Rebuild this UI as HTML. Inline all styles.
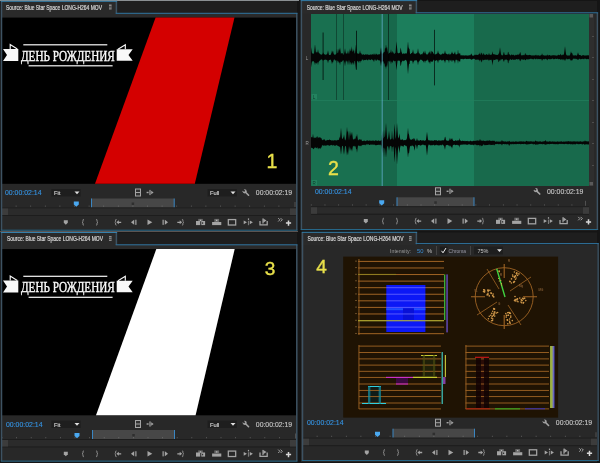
<!DOCTYPE html>
<html><head><meta charset="utf-8"><style>
html,body{margin:0;padding:0;background:#151515;width:600px;height:463px;overflow:hidden;}
svg{display:block;font-family:"Liberation Sans",sans-serif;will-change:transform;}
</style></head><body>
<svg width="600" height="463" viewBox="0 0 600 463" font-family="Liberation Sans"><rect x="0" y="0" width="600" height="463" fill="#151515" /><rect x="0" y="0" width="299" height="1" fill="#8a8f92" /><rect x="117" y="1" width="180" height="12.5" fill="#1e1e1e" /><rect x="1" y="1" width="116" height="13" fill="#2a2a2a" /><rect x="1" y="13.5" width="296" height="217" fill="#282828" /><rect x="1" y="13" width="296" height="4.600000000000001" fill="#2a2a2a" /><text x="6" y="9.6" font-size="6.5" fill="#d4d4d4" text-anchor="start" textLength="96" lengthAdjust="spacingAndGlyphs" stroke="#d4d4d4" stroke-width="0.22">Source: Blue Star Space LONG-H264 MOV</text><rect x="109" y="4.5" width="2.6" height="5" fill="#8a8a8a"/><rect x="109" y="6" width="2.6" height="0.6" fill="#2a2a2a"/><rect x="109" y="7.6" width="2.6" height="0.6" fill="#2a2a2a"/><rect x="2" y="17.6" width="295" height="166.2" fill="#000000" /><polygon points="155.6,17.6 234.5,17.6 194.8,183.8 95,183.8" fill="#d40000"/><g fill="#f8f8f8"><path d="M3,49 H18.3 V60.9 H3 L7,55 Z"/><path d="M116.7,49.3 H132.7 L128.5,55 L132.7,60.7 H116.7 Z"/></g><path d="M10.2,49 V44.6 L17.3,49" stroke="#f8f8f8" stroke-width="1.15" fill="none"/><path d="M118,49.3 L125.3,44.8 V49.3" stroke="#f8f8f8" stroke-width="1.15" fill="none"/><rect x="23.3" y="44.2" width="84" height="1.2" fill="#f8f8f8"/><rect x="28.6" y="65.2" width="84" height="1.2" fill="#f8f8f8"/><text x="21" y="60.8" font-family="Liberation Serif" font-size="15.4" fill="#f8f8f8" stroke="#f8f8f8" stroke-width="0.45" textLength="93.7" lengthAdjust="spacingAndGlyphs">ДЕНЬ РОЖДЕНИЯ</text><text x="272" y="167.8" font-size="19.5" fill="#e8e04a" text-anchor="middle" stroke="#e8e04a" stroke-width="0.35">1</text><text x="5" y="195.0" font-size="7.6" fill="#3592e0" text-anchor="start" textLength="36.5" lengthAdjust="spacingAndGlyphs" stroke="#3592e0" stroke-width="0.15">00:00:02:14</text><text x="292.2" y="195.0" font-size="7.6" fill="#c4c4c4" text-anchor="end" textLength="36.4" lengthAdjust="spacingAndGlyphs" stroke="#c8c8c8" stroke-width="0.15">00:00:02:19</text><g transform="translate(246,192.7) scale(0.85)"><path d="M-0.5,-0.5 L3,3" stroke="#a4a4a4" stroke-width="1.9" stroke-linecap="round"/><circle cx="-1.6" cy="-1.6" r="2.4" fill="#a4a4a4"/><path d="M-4.6,-3.2 L-2.3,-0.9 L-0.9,-2.3 L-3.2,-4.6 Z" fill="#262626"/></g><rect x="51.3" y="189.0" width="29.4" height="7.5" fill="#1e1e1e" /><text x="54" y="195.0" font-size="5.8" fill="#d0d0d0" text-anchor="start" stroke="#d0d0d0" stroke-width="0.15">Fit</text><path d="M74.5,191.39999999999998 h5 l-2.5,2.8 z" fill="#e0e0e0"/><rect x="207.5" y="189.0" width="29.4" height="7.5" fill="#1e1e1e" /><text x="210" y="195.0" font-size="5.8" fill="#d0d0d0" text-anchor="start" stroke="#d0d0d0" stroke-width="0.15">Full</text><path d="M230.5,191.39999999999998 h5 l-2.5,2.8 z" fill="#e0e0e0"/><rect x="135" y="188.5" width="6" height="8" fill="#a4a4a4"/><rect x="136" y="189.5" width="4" height="2.5" fill="#333"/><rect x="136" y="193.0" width="4" height="2.5" fill="#333"/><rect x="146.6" y="191.8" width="2" height="1.4" fill="#a4a4a4"/><rect x="149.4" y="189.9" width="1.2" height="5.2" fill="#a4a4a4"/><path d="M151.2,190.8 L153.6,192.5 L151.2,194.2 Z" fill="#a4a4a4"/><rect x="1.1" y="205.5" width="0.8" height="1.3" fill="#5a5a5a"/><rect x="15.700000000000001" y="205.5" width="0.8" height="1.3" fill="#5a5a5a"/><rect x="30.3" y="205.5" width="0.8" height="1.3" fill="#5a5a5a"/><rect x="44.9" y="205.5" width="0.8" height="1.3" fill="#5a5a5a"/><rect x="59.5" y="205.5" width="0.8" height="1.3" fill="#5a5a5a"/><rect x="74.1" y="205.5" width="0.8" height="1.3" fill="#5a5a5a"/><rect x="88.69999999999999" y="205.5" width="0.8" height="1.3" fill="#5a5a5a"/><rect x="103.3" y="205.5" width="0.8" height="1.3" fill="#5a5a5a"/><rect x="117.89999999999999" y="205.5" width="0.8" height="1.3" fill="#5a5a5a"/><rect x="132.5" y="205.5" width="0.8" height="1.3" fill="#5a5a5a"/><rect x="147.1" y="205.5" width="0.8" height="1.3" fill="#5a5a5a"/><rect x="161.7" y="205.5" width="0.8" height="1.3" fill="#5a5a5a"/><rect x="176.29999999999998" y="205.5" width="0.8" height="1.3" fill="#5a5a5a"/><rect x="190.89999999999998" y="205.5" width="0.8" height="1.3" fill="#5a5a5a"/><rect x="205.5" y="205.5" width="0.8" height="1.3" fill="#5a5a5a"/><rect x="220.1" y="205.5" width="0.8" height="1.3" fill="#5a5a5a"/><rect x="234.7" y="205.5" width="0.8" height="1.3" fill="#5a5a5a"/><rect x="249.29999999999998" y="205.5" width="0.8" height="1.3" fill="#5a5a5a"/><rect x="263.90000000000003" y="205.5" width="0.8" height="1.3" fill="#5a5a5a"/><rect x="278.5" y="205.5" width="0.8" height="1.3" fill="#5a5a5a"/><rect x="294.6" y="202.0" width="0.8" height="5" fill="#5a5a5a"/><rect x="91.5" y="198.5" width="82.69999999999999" height="9" fill="#474747" /><rect x="91.0" y="198.5" width="1" height="9" fill="#3a86c2"/><rect x="173.7" y="198.5" width="1" height="9" fill="#3a86c2"/><rect x="131.65" y="202.5" width="2.5" height="2.5" fill="#2e2e2e" /><rect x="103.3" y="205.5" width="0.8" height="1.3" fill="#6a6a6a"/><rect x="117.89999999999999" y="205.5" width="0.8" height="1.3" fill="#6a6a6a"/><rect x="132.5" y="205.5" width="0.8" height="1.3" fill="#6a6a6a"/><rect x="147.1" y="205.5" width="0.8" height="1.3" fill="#6a6a6a"/><rect x="161.7" y="205.5" width="0.8" height="1.3" fill="#6a6a6a"/><path d="M73.8,201.5 h5 v3 l-2.5,2.2 l-2.5,-2.2 z" fill="#4aa8f0"/><rect x="2" y="207.5" width="294" height="1" fill="#1d1d1d" /><rect x="2" y="208.5" width="294" height="6.5" fill="#2b2b2b" /><rect x="2" y="215.0" width="294" height="1" fill="#1d1d1d" /><rect x="2" y="208.5" width="6" height="6.5" fill="#3c3c3c" /><rect x="290" y="208.5" width="6" height="6.5" fill="#3c3c3c" /><g transform="translate(65.8,222.3) scale(0.8)"><path d="M-2.5,-2.5 h5 v3 l-2.5,2.5 l-2.5,-2.5 z" fill="#a4a4a4"/></g><g transform="translate(83,222.3) scale(0.8)"><path d="M1.2,-3.5 h-0.6 q-0.6,0 -0.6,0.6 v2 l-1.0,0.9 l1.0,0.9 v2 q0,0.6 0.6,0.6 h0.6" stroke="#a4a4a4" stroke-width="1" fill="none"/></g><g transform="translate(97,222.3) scale(0.8)"><path d="M-1.2,-3.5 h0.6 q0.6,0 0.6,0.6 v2 l1.0,0.9 l-1.0,0.9 v2 q0,0.6 -0.6,0.6 h-0.6" stroke="#a4a4a4" stroke-width="1" fill="none"/></g><g transform="translate(118,222.3) scale(0.8)"><path d="M-1.8,-3.5 h-0.6 q-0.6,0 -0.6,0.6 v2 l-1.0,0.9 l1.0,0.9 v2 q0,0.6 0.6,0.6 h0.6" stroke="#a4a4a4" stroke-width="1" fill="none"/><path d="M-2,0 l3,-2.5 v1.7 h3 v1.6 h-3 v1.7 z" fill="#a4a4a4"/></g><g transform="translate(134,222.3) scale(0.8)"><path d="M-3.8,0 l4,-3.2 v6.4 z" fill="#a4a4a4"/><rect x="1.6" y="-3.2" width="1.5" height="6.4" fill="#a4a4a4"/></g><g transform="translate(149.5,222.3) scale(0.8)"><path d="M-2.5,-3.5 l6,3.5 l-6,3.5 z" fill="#a4a4a4"/></g><g transform="translate(165,222.3) scale(0.8)"><rect x="-3.1" y="-3.2" width="1.5" height="6.4" fill="#a4a4a4"/><path d="M-0.2,-3.2 l4,3.2 l-4,3.2 z" fill="#a4a4a4"/></g><g transform="translate(180.5,222.3) scale(0.8)"><path d="M-4,-0.8 h3 v-1.7 l3,2.5 l-3,2.5 v-1.7 h-3 z" fill="#a4a4a4"/><path d="M1.8,-3.5 h0.6 q0.6,0 0.6,0.6 v2 l1.0,0.9 l-1.0,0.9 v2 q0,0.6 -0.6,0.6 h-0.6" stroke="#a4a4a4" stroke-width="1" fill="none"/></g><g transform="translate(200.5,222.3) scale(1.0)"><rect x="-2.3" y="-3.4" width="4.6" height="2.6" fill="#6a6a6a"/><rect x="-0.6" y="-2.5" width="1.2" height="1.2" fill="#b8b8b8"/><rect x="-4.5" y="-1.3" width="4.2" height="4.1" fill="#a4a4a4"/><rect x="0.8" y="-1.3" width="3.8" height="4.1" fill="#a4a4a4"/><rect x="1.5" y="0" width="1.2" height="1.5" fill="#303030"/></g><g transform="translate(216.7,222.3) scale(1.0)"><rect x="-4.6" y="-0.3" width="9.2" height="3.1" fill="#a4a4a4"/><rect x="-2.4" y="-3.4" width="4.8" height="3.1" fill="#6a6a6a"/><rect x="-0.6" y="-2.5" width="1.2" height="1.2" fill="#c0c0c0"/></g><g transform="translate(232,222.3) scale(0.8)"><rect x="-4.6" y="-3.4" width="9.2" height="6.8" fill="none" stroke="#a4a4a4" stroke-width="1.6"/></g><g transform="translate(248.5,222.3) scale(1.0)"><path d="M-4.8,-1.9 L-1.5,0 L-4.8,1.9 Z M1.3,-1.9 L4.4,0 L1.3,1.9 Z" fill="#a4a4a4"/><rect x="-0.6" y="-3.9" width="1.2" height="1.5" fill="#a4a4a4"/><rect x="-0.6" y="-1.5" width="1.2" height="4.4" fill="#7a7a7a"/></g><g transform="translate(263.6,222.3) scale(1.0)"><path d="M-3.6,-1.2 V2.6 H3.6 V-1.2" stroke="#a4a4a4" stroke-width="1.3" fill="none"/><path d="M-0.4,-3.9 L2.9,-1.7 L-0.4,0.5 Z" fill="#a4a4a4"/><rect x="-1.2" y="-3.9" width="1.1" height="5.2" fill="#a4a4a4"/></g><path d="M278.2,218.10000000000002 l1.7,1.7 l-1.7,1.7 M280.6,218.10000000000002 l1.7,1.7 l-1.7,1.7" stroke="#b8b8b8" stroke-width="0.85" fill="none"/><path d="M285.9,223.10000000000002 h5.2 M288.5,220.5 v5.2" stroke="#d8d8d8" stroke-width="1.5"/><rect x="0.75" y="1.3" width="1.5" height="228.89999999999998" fill="#3d5262"/><rect x="115.65" y="1.3" width="1.5" height="12.0" fill="#3d5262"/><rect x="296.05" y="13.3" width="1.5" height="216.89999999999998" fill="#3d5262"/><rect x="0.75" y="0.8" width="116.4" height="1" fill="#3580ac"/><rect x="115.65" y="12.8" width="181.9" height="1" fill="#2f74a0"/><rect x="0.75" y="229.7" width="296.8" height="1" fill="#276788"/><rect x="0" y="231" width="298" height="1" fill="#5a5452" /><rect x="117" y="232.5" width="180" height="12.5" fill="#1e1e1e" /><rect x="1" y="232.5" width="116" height="13" fill="#2a2a2a" /><rect x="1" y="245.0" width="296" height="217" fill="#282828" /><rect x="1" y="244.5" width="296" height="4.600000000000001" fill="#2a2a2a" /><text x="7" y="241.1" font-size="6.5" fill="#d4d4d4" text-anchor="start" textLength="96" lengthAdjust="spacingAndGlyphs" stroke="#d4d4d4" stroke-width="0.22">Source: Blue Star Space LONG-H264 MOV</text><rect x="109" y="236.0" width="2.6" height="5" fill="#8a8a8a"/><rect x="109" y="237.5" width="2.6" height="0.6" fill="#2a2a2a"/><rect x="109" y="239.1" width="2.6" height="0.6" fill="#2a2a2a"/><rect x="2" y="249.1" width="295" height="166.2" fill="#000000" /><polygon points="156.3,249.1 234.7,249.1 195.6,415.3 96,415.3" fill="#ffffff"/><g fill="#f8f8f8"><path d="M3,280.5 H18.3 V292.4 H3 L7,286.5 Z"/><path d="M116.7,280.8 H132.7 L128.5,286.5 L132.7,292.2 H116.7 Z"/></g><path d="M10.2,280.5 V276.1 L17.3,280.5" stroke="#f8f8f8" stroke-width="1.15" fill="none"/><path d="M118,280.8 L125.3,276.3 V280.8" stroke="#f8f8f8" stroke-width="1.15" fill="none"/><rect x="23.3" y="275.7" width="84" height="1.2" fill="#f8f8f8"/><rect x="28.6" y="296.7" width="84" height="1.2" fill="#f8f8f8"/><text x="21" y="292.3" font-family="Liberation Serif" font-size="15.4" fill="#f8f8f8" stroke="#f8f8f8" stroke-width="0.45" textLength="93.7" lengthAdjust="spacingAndGlyphs">ДЕНЬ РОЖДЕНИЯ</text><text x="270" y="274.7" font-size="19" fill="#e8e04a" text-anchor="middle" stroke="#e8e04a" stroke-width="0.35">3</text><text x="6" y="426.5" font-size="7.6" fill="#3592e0" text-anchor="start" textLength="36.5" lengthAdjust="spacingAndGlyphs" stroke="#3592e0" stroke-width="0.15">00:00:02:14</text><text x="292.2" y="426.5" font-size="7.6" fill="#c4c4c4" text-anchor="end" textLength="36.4" lengthAdjust="spacingAndGlyphs" stroke="#c8c8c8" stroke-width="0.15">00:00:02:19</text><g transform="translate(246,424.2) scale(0.85)"><path d="M-0.5,-0.5 L3,3" stroke="#a4a4a4" stroke-width="1.9" stroke-linecap="round"/><circle cx="-1.6" cy="-1.6" r="2.4" fill="#a4a4a4"/><path d="M-4.6,-3.2 L-2.3,-0.9 L-0.9,-2.3 L-3.2,-4.6 Z" fill="#262626"/></g><rect x="51.3" y="420.5" width="29.4" height="7.5" fill="#1e1e1e" /><text x="54" y="426.5" font-size="5.8" fill="#d0d0d0" text-anchor="start" stroke="#d0d0d0" stroke-width="0.15">Fit</text><path d="M74.5,422.9 h5 l-2.5,2.8 z" fill="#e0e0e0"/><rect x="207.5" y="420.5" width="29.4" height="7.5" fill="#1e1e1e" /><text x="210" y="426.5" font-size="5.8" fill="#d0d0d0" text-anchor="start" stroke="#d0d0d0" stroke-width="0.15">Full</text><path d="M230.5,422.9 h5 l-2.5,2.8 z" fill="#e0e0e0"/><rect x="135" y="420.0" width="6" height="8" fill="#a4a4a4"/><rect x="136" y="421.0" width="4" height="2.5" fill="#333"/><rect x="136" y="424.5" width="4" height="2.5" fill="#333"/><rect x="146.6" y="423.3" width="2" height="1.4" fill="#a4a4a4"/><rect x="149.4" y="421.4" width="1.2" height="5.2" fill="#a4a4a4"/><path d="M151.2,422.3 L153.6,424.0 L151.2,425.7 Z" fill="#a4a4a4"/><rect x="1.6" y="437.0" width="0.8" height="1.3" fill="#5a5a5a"/><rect x="16.200000000000003" y="437.0" width="0.8" height="1.3" fill="#5a5a5a"/><rect x="30.8" y="437.0" width="0.8" height="1.3" fill="#5a5a5a"/><rect x="45.4" y="437.0" width="0.8" height="1.3" fill="#5a5a5a"/><rect x="60.0" y="437.0" width="0.8" height="1.3" fill="#5a5a5a"/><rect x="74.6" y="437.0" width="0.8" height="1.3" fill="#5a5a5a"/><rect x="89.19999999999999" y="437.0" width="0.8" height="1.3" fill="#5a5a5a"/><rect x="103.8" y="437.0" width="0.8" height="1.3" fill="#5a5a5a"/><rect x="118.39999999999999" y="437.0" width="0.8" height="1.3" fill="#5a5a5a"/><rect x="133.0" y="437.0" width="0.8" height="1.3" fill="#5a5a5a"/><rect x="147.6" y="437.0" width="0.8" height="1.3" fill="#5a5a5a"/><rect x="162.2" y="437.0" width="0.8" height="1.3" fill="#5a5a5a"/><rect x="176.79999999999998" y="437.0" width="0.8" height="1.3" fill="#5a5a5a"/><rect x="191.39999999999998" y="437.0" width="0.8" height="1.3" fill="#5a5a5a"/><rect x="206.0" y="437.0" width="0.8" height="1.3" fill="#5a5a5a"/><rect x="220.6" y="437.0" width="0.8" height="1.3" fill="#5a5a5a"/><rect x="235.2" y="437.0" width="0.8" height="1.3" fill="#5a5a5a"/><rect x="249.79999999999998" y="437.0" width="0.8" height="1.3" fill="#5a5a5a"/><rect x="264.40000000000003" y="437.0" width="0.8" height="1.3" fill="#5a5a5a"/><rect x="279.0" y="437.0" width="0.8" height="1.3" fill="#5a5a5a"/><rect x="295.1" y="433.5" width="0.8" height="5" fill="#5a5a5a"/><rect x="92.5" y="430.0" width="82.0" height="9" fill="#474747" /><rect x="92.0" y="430.0" width="1" height="9" fill="#3a86c2"/><rect x="174.0" y="430.0" width="1" height="9" fill="#3a86c2"/><rect x="132.3" y="434.0" width="2.5" height="2.5" fill="#2e2e2e" /><rect x="103.8" y="437.0" width="0.8" height="1.3" fill="#6a6a6a"/><rect x="118.39999999999999" y="437.0" width="0.8" height="1.3" fill="#6a6a6a"/><rect x="133.0" y="437.0" width="0.8" height="1.3" fill="#6a6a6a"/><rect x="147.6" y="437.0" width="0.8" height="1.3" fill="#6a6a6a"/><rect x="162.2" y="437.0" width="0.8" height="1.3" fill="#6a6a6a"/><path d="M74.5,433.0 h5 v3 l-2.5,2.2 l-2.5,-2.2 z" fill="#4aa8f0"/><rect x="2" y="439.0" width="294" height="1" fill="#1d1d1d" /><rect x="2" y="440.0" width="294" height="6.5" fill="#2b2b2b" /><rect x="2" y="446.5" width="294" height="1" fill="#1d1d1d" /><rect x="2" y="440.0" width="6" height="6.5" fill="#3c3c3c" /><rect x="290" y="440.0" width="6" height="6.5" fill="#3c3c3c" /><g transform="translate(65.8,453.8) scale(0.8)"><path d="M-2.5,-2.5 h5 v3 l-2.5,2.5 l-2.5,-2.5 z" fill="#a4a4a4"/></g><g transform="translate(83,453.8) scale(0.8)"><path d="M1.2,-3.5 h-0.6 q-0.6,0 -0.6,0.6 v2 l-1.0,0.9 l1.0,0.9 v2 q0,0.6 0.6,0.6 h0.6" stroke="#a4a4a4" stroke-width="1" fill="none"/></g><g transform="translate(97,453.8) scale(0.8)"><path d="M-1.2,-3.5 h0.6 q0.6,0 0.6,0.6 v2 l1.0,0.9 l-1.0,0.9 v2 q0,0.6 -0.6,0.6 h-0.6" stroke="#a4a4a4" stroke-width="1" fill="none"/></g><g transform="translate(118,453.8) scale(0.8)"><path d="M-1.8,-3.5 h-0.6 q-0.6,0 -0.6,0.6 v2 l-1.0,0.9 l1.0,0.9 v2 q0,0.6 0.6,0.6 h0.6" stroke="#a4a4a4" stroke-width="1" fill="none"/><path d="M-2,0 l3,-2.5 v1.7 h3 v1.6 h-3 v1.7 z" fill="#a4a4a4"/></g><g transform="translate(134,453.8) scale(0.8)"><path d="M-3.8,0 l4,-3.2 v6.4 z" fill="#a4a4a4"/><rect x="1.6" y="-3.2" width="1.5" height="6.4" fill="#a4a4a4"/></g><g transform="translate(149.5,453.8) scale(0.8)"><path d="M-2.5,-3.5 l6,3.5 l-6,3.5 z" fill="#a4a4a4"/></g><g transform="translate(165,453.8) scale(0.8)"><rect x="-3.1" y="-3.2" width="1.5" height="6.4" fill="#a4a4a4"/><path d="M-0.2,-3.2 l4,3.2 l-4,3.2 z" fill="#a4a4a4"/></g><g transform="translate(180.5,453.8) scale(0.8)"><path d="M-4,-0.8 h3 v-1.7 l3,2.5 l-3,2.5 v-1.7 h-3 z" fill="#a4a4a4"/><path d="M1.8,-3.5 h0.6 q0.6,0 0.6,0.6 v2 l1.0,0.9 l-1.0,0.9 v2 q0,0.6 -0.6,0.6 h-0.6" stroke="#a4a4a4" stroke-width="1" fill="none"/></g><g transform="translate(200.5,453.8) scale(1.0)"><rect x="-2.3" y="-3.4" width="4.6" height="2.6" fill="#6a6a6a"/><rect x="-0.6" y="-2.5" width="1.2" height="1.2" fill="#b8b8b8"/><rect x="-4.5" y="-1.3" width="4.2" height="4.1" fill="#a4a4a4"/><rect x="0.8" y="-1.3" width="3.8" height="4.1" fill="#a4a4a4"/><rect x="1.5" y="0" width="1.2" height="1.5" fill="#303030"/></g><g transform="translate(216.7,453.8) scale(1.0)"><rect x="-4.6" y="-0.3" width="9.2" height="3.1" fill="#a4a4a4"/><rect x="-2.4" y="-3.4" width="4.8" height="3.1" fill="#6a6a6a"/><rect x="-0.6" y="-2.5" width="1.2" height="1.2" fill="#c0c0c0"/></g><g transform="translate(232,453.8) scale(0.8)"><rect x="-4.6" y="-3.4" width="9.2" height="6.8" fill="none" stroke="#a4a4a4" stroke-width="1.6"/></g><g transform="translate(248.5,453.8) scale(1.0)"><path d="M-4.8,-1.9 L-1.5,0 L-4.8,1.9 Z M1.3,-1.9 L4.4,0 L1.3,1.9 Z" fill="#a4a4a4"/><rect x="-0.6" y="-3.9" width="1.2" height="1.5" fill="#a4a4a4"/><rect x="-0.6" y="-1.5" width="1.2" height="4.4" fill="#7a7a7a"/></g><g transform="translate(263.6,453.8) scale(1.0)"><path d="M-3.6,-1.2 V2.6 H3.6 V-1.2" stroke="#a4a4a4" stroke-width="1.3" fill="none"/><path d="M-0.4,-3.9 L2.9,-1.7 L-0.4,0.5 Z" fill="#a4a4a4"/><rect x="-1.2" y="-3.9" width="1.1" height="5.2" fill="#a4a4a4"/></g><path d="M278.2,449.6 l1.7,1.7 l-1.7,1.7 M280.6,449.6 l1.7,1.7 l-1.7,1.7" stroke="#b8b8b8" stroke-width="0.85" fill="none"/><path d="M285.9,454.6 h5.2 M288.5,452.0 v5.2" stroke="#d8d8d8" stroke-width="1.5"/><rect x="0.75" y="232.5" width="1.5" height="228.6" fill="#3d5262"/><rect x="115.65" y="232.5" width="1.5" height="12.3" fill="#3d5262"/><rect x="296.05" y="244.8" width="1.5" height="216.29999999999998" fill="#3d5262"/><rect x="0.75" y="232.0" width="116.4" height="1" fill="#3580ac"/><rect x="115.65" y="244.3" width="181.9" height="1" fill="#2f74a0"/><rect x="0.75" y="460.6" width="296.8" height="1" fill="#276788"/><rect x="417" y="1" width="180" height="12.5" fill="#1e1e1e" /><rect x="301" y="1" width="116" height="13" fill="#2a2a2a" /><rect x="301" y="13.5" width="296" height="217" fill="#282828" /><text x="306.7" y="9.6" font-size="6.5" fill="#d4d4d4" text-anchor="start" textLength="96" lengthAdjust="spacingAndGlyphs" stroke="#d4d4d4" stroke-width="0.22">Source: Blue Star Space LONG-H264 MOV</text><rect x="409" y="4.5" width="2.6" height="5" fill="#8a8a8a"/><rect x="409" y="6" width="2.6" height="0.6" fill="#2a2a2a"/><rect x="409" y="7.6" width="2.6" height="0.6" fill="#2a2a2a"/><rect x="311" y="14" width="71.5" height="172" fill="#197050" /><rect x="382.5" y="14" width="14.5" height="172" fill="#17684b" /><rect x="397" y="14" width="77" height="172" fill="#1c7e5c" /><rect x="474" y="14" width="115" height="172" fill="#186a4c" /><rect x="311" y="100" width="278" height="1" fill="#22805e" opacity="0.7"/><rect x="589" y="14" width="5" height="172" fill="#2e2e2e" /><rect x="589.5" y="14" width="3.5" height="3.5" fill="#5a5a5a" /><rect x="589.5" y="182" width="3.5" height="3.5" fill="#5a5a5a" /><rect x="592" y="36" width="2" height="0.8" fill="#555"/><rect x="592" y="57" width="2" height="0.8" fill="#555"/><rect x="592" y="79" width="2" height="0.8" fill="#555"/><rect x="592" y="100" width="2" height="0.8" fill="#555"/><rect x="592" y="122" width="2" height="0.8" fill="#555"/><rect x="592" y="143" width="2" height="0.8" fill="#555"/><rect x="592" y="165" width="2" height="0.8" fill="#555"/><text x="307" y="59.5" font-size="4.5" fill="#9a9a9a" text-anchor="middle" >L</text><text x="307" y="145" font-size="4.5" fill="#9a9a9a" text-anchor="middle" >R</text><rect x="311.5" y="94" width="5.5" height="5.5" fill="#23825f" /><text x="314" y="98.7" font-size="4.5" fill="#0a3a28" text-anchor="middle" >L</text><rect x="311.5" y="180" width="5.5" height="5.5" fill="#23825f" /><text x="314" y="184.7" font-size="4.5" fill="#0a3a28" text-anchor="middle" >R</text><polygon points="311.0,53.30 311.5,46.88 312.0,53.18 312.5,53.83 313.0,52.94 313.5,54.01 314.0,53.49 314.5,48.84 315.0,44.20 315.5,48.84 316.0,52.88 316.5,51.47 317.0,52.67 317.5,52.06 318.0,49.20 318.5,52.06 319.0,53.20 319.5,53.29 320.0,53.95 320.5,54.16 321.0,54.84 321.5,54.87 322.0,54.25 322.5,54.15 323.0,52.23 323.5,53.37 324.0,54.07 324.5,53.98 325.0,55.16 325.5,54.24 326.0,55.14 326.5,54.00 327.0,54.48 327.5,52.70 328.0,50.20 328.5,52.70 329.0,55.00 329.5,55.08 330.0,55.10 330.5,54.97 331.0,53.99 331.5,52.70 332.0,50.20 332.5,52.70 333.0,50.61 333.5,53.19 334.0,54.25 334.5,54.86 335.0,54.66 335.5,54.41 336.0,54.21 336.5,53.27 337.0,48.60 337.5,52.63 338.0,53.35 338.5,50.43 339.0,48.47 339.5,50.77 340.0,47.20 340.5,50.77 341.0,54.34 341.5,52.99 342.0,53.03 342.5,53.08 343.0,54.52 343.5,54.69 344.0,53.91 344.5,51.41 345.0,48.20 345.5,51.41 346.0,54.09 346.5,53.01 347.0,53.88 347.5,52.70 348.0,50.20 348.5,52.70 349.0,54.19 349.5,51.32 350.0,48.20 350.5,51.41 351.0,50.25 351.5,46.31 352.0,51.71 352.5,51.41 353.0,48.20 353.5,51.41 354.0,49.75 354.5,53.36 355.0,53.49 355.5,48.84 356.0,44.20 356.5,48.84 357.0,53.49 357.5,53.21 358.0,53.63 358.5,53.39 359.0,54.10 359.5,52.70 360.0,50.20 360.5,52.70 361.0,53.51 361.5,53.62 362.0,54.92 362.5,54.25 363.0,54.99 363.5,53.71 364.0,54.64 364.5,54.82 365.0,54.99 365.5,54.20 366.0,54.11 366.5,54.49 367.0,55.07 367.5,54.16 368.0,54.33 368.5,54.89 369.0,54.66 369.5,54.97 370.0,54.44 370.5,54.84 371.0,53.97 371.5,55.15 372.0,54.12 372.5,54.33 373.0,54.85 373.5,54.57 374.0,53.20 374.5,54.17 375.0,55.07 375.5,54.43 376.0,53.17 376.5,54.20 377.0,54.36 377.5,54.63 378.0,54.85 378.5,54.32 379.0,54.29 379.5,54.34 380.0,54.34 380.5,50.77 381.0,47.20 381.5,50.77 382.0,54.10 382.5,53.16 383.0,53.63 383.5,52.68 384.0,51.65 384.5,52.16 385.0,47.83 385.5,48.84 386.0,44.20 386.5,48.84 387.0,46.42 387.5,50.22 388.0,52.72 388.5,54.19 389.0,53.30 389.5,52.74 390.0,52.81 390.5,52.06 391.0,49.20 391.5,52.06 392.0,53.37 392.5,50.73 393.0,52.55 393.5,52.55 394.0,53.93 394.5,53.80 395.0,53.14 395.5,52.63 396.0,46.91 396.5,41.20 397.0,46.91 397.5,52.51 398.0,53.26 398.5,53.33 399.0,53.20 399.5,52.51 400.0,53.36 400.5,47.39 401.0,49.20 401.5,52.06 402.0,52.90 402.5,54.10 403.0,54.35 403.5,53.15 404.0,53.27 404.5,54.24 405.0,52.96 405.5,53.21 406.0,54.24 406.5,53.37 407.0,52.63 407.5,46.91 408.0,41.20 408.5,46.91 409.0,48.87 409.5,48.82 410.0,53.65 410.5,54.22 411.0,53.46 411.5,53.09 412.0,53.08 412.5,52.06 413.0,49.20 413.5,52.06 414.0,54.19 414.5,53.02 415.0,54.16 415.5,54.12 416.0,53.12 416.5,53.19 417.0,53.87 417.5,51.41 418.0,48.20 418.5,51.41 419.0,53.69 419.5,52.94 420.0,54.50 420.5,54.79 421.0,54.12 421.5,54.10 422.0,54.67 422.5,53.69 423.0,52.77 423.5,50.97 424.0,53.63 424.5,52.70 425.0,50.20 425.5,52.70 426.0,53.90 426.5,54.68 427.0,53.40 427.5,54.66 428.0,54.18 428.5,53.00 429.0,51.93 429.5,52.70 430.0,50.20 430.5,52.70 431.0,54.56 431.5,50.40 432.0,51.64 432.5,51.61 433.0,52.55 433.5,53.80 434.0,53.87 434.5,54.44 435.0,54.74 435.5,53.99 436.0,54.60 436.5,53.50 437.0,53.96 437.5,52.70 438.0,50.20 438.5,52.70 439.0,53.48 439.5,54.03 440.0,54.57 440.5,54.82 441.0,54.39 441.5,54.57 442.0,54.12 442.5,53.50 443.0,53.46 443.5,53.74 444.0,54.05 444.5,52.70 445.0,50.20 445.5,52.70 446.0,54.03 446.5,53.53 447.0,54.16 447.5,54.40 448.0,53.97 448.5,54.52 449.0,53.02 449.5,54.58 450.0,54.72 450.5,54.37 451.0,53.83 451.5,53.34 452.0,51.20 452.5,53.34 453.0,53.49 453.5,54.16 454.0,53.87 454.5,53.08 455.0,51.21 455.5,54.01 456.0,54.64 456.5,54.16 457.0,54.29 457.5,53.93 458.0,49.24 458.5,53.49 459.0,53.45 459.5,53.66 460.0,52.86 460.5,55.14 461.0,55.53 461.5,55.23 462.0,55.32 462.5,55.17 463.0,55.63 463.5,55.03 464.0,55.81 464.5,55.61 465.0,55.29 465.5,55.36 466.0,55.77 466.5,55.35 467.0,55.51 467.5,55.66 468.0,55.18 468.5,55.78 469.0,55.12 469.5,55.16 470.0,55.47 470.5,55.12 471.0,53.94 471.5,53.47 472.0,55.15 472.5,55.47 473.0,55.76 473.5,55.78 474.0,55.34 474.5,55.23 475.0,54.36 475.5,55.06 476.0,55.15 476.5,54.42 477.0,54.97 477.5,54.88 478.0,54.87 478.5,54.44 479.0,54.18 479.5,53.84 480.0,52.20 480.5,54.93 481.0,54.16 481.5,52.51 482.0,53.32 482.5,54.83 483.0,55.08 483.5,52.81 484.0,54.28 484.5,55.10 485.0,54.22 485.5,55.30 486.0,54.64 486.5,54.12 487.0,54.32 487.5,54.64 488.0,55.22 488.5,54.40 489.0,52.80 489.5,54.79 490.0,54.51 490.5,55.05 491.0,54.67 491.5,54.83 492.0,53.96 492.5,51.18 493.0,54.06 493.5,54.18 494.0,54.29 494.5,54.26 495.0,54.63 495.5,54.50 496.0,54.97 496.5,54.67 497.0,55.09 497.5,54.73 498.0,55.14 498.5,53.41 499.0,53.82 499.5,50.77 500.0,47.20 500.5,50.77 501.0,54.34 501.5,54.91 502.0,55.51 502.5,55.35 503.0,55.29 503.5,52.90 504.0,51.87 504.5,54.32 505.0,55.09 505.5,54.65 506.0,55.26 506.5,54.54 507.0,54.95 507.5,54.74 508.0,51.69 508.5,52.22 509.0,54.97 509.5,54.08 510.0,54.83 510.5,55.54 511.0,55.14 511.5,54.32 512.0,54.67 512.5,55.20 513.0,54.59 513.5,54.85 514.0,55.26 514.5,55.38 515.0,55.55 515.5,54.62 516.0,55.46 516.5,54.76 517.0,55.02 517.5,54.50 518.0,54.61 518.5,54.68 519.0,54.54 519.5,53.99 520.0,52.20 520.5,52.51 521.0,55.21 521.5,55.47 522.0,55.04 522.5,55.15 523.0,55.43 523.5,55.04 524.0,54.64 524.5,55.51 525.0,53.46 525.5,53.18 526.0,55.22 526.5,54.67 527.0,54.87 527.5,55.14 528.0,55.22 528.5,55.12 529.0,55.27 529.5,54.75 530.0,55.00 530.5,55.20 531.0,55.11 531.5,55.72 532.0,55.24 532.5,55.69 533.0,55.10 533.5,55.39 534.0,55.71 534.5,55.48 535.0,55.02 535.5,55.39 536.0,54.59 536.5,55.40 537.0,55.48 537.5,55.49 538.0,54.97 538.5,55.26 539.0,55.83 539.5,55.54 540.0,55.75 540.5,55.39 541.0,55.11 541.5,55.23 542.0,53.33 542.5,54.56 543.0,55.72 543.5,54.96 544.0,55.21 544.5,55.67 545.0,55.29 545.5,55.78 546.0,55.33 546.5,55.55 547.0,55.52 547.5,54.16 548.0,55.73 548.5,55.36 549.0,55.35 549.5,55.03 550.0,55.11 550.5,55.74 551.0,55.59 551.5,55.63 552.0,55.10 552.5,55.36 553.0,55.82 553.5,54.96 554.0,55.26 554.5,55.25 555.0,55.51 555.5,55.13 556.0,55.67 556.5,55.72 557.0,55.34 557.5,55.38 558.0,55.16 558.5,54.47 559.0,55.25 559.5,54.99 560.0,55.37 560.5,53.70 561.0,54.55 561.5,55.41 562.0,55.10 562.5,55.30 563.0,53.97 563.5,55.22 564.0,54.06 564.5,50.13 565.0,46.20 565.5,50.13 566.0,54.06 566.5,55.32 567.0,55.13 567.5,55.40 568.0,55.80 568.5,55.38 569.0,55.15 569.5,55.64 570.0,55.03 570.5,53.34 571.0,51.20 571.5,53.34 572.0,52.75 572.5,53.91 573.0,55.74 573.5,54.99 574.0,55.63 574.5,55.56 575.0,55.04 575.5,55.49 576.0,55.32 576.5,55.82 577.0,55.57 577.5,53.99 578.0,52.20 578.5,53.99 579.0,55.04 579.5,55.10 580.0,55.11 580.5,55.06 581.0,55.67 581.5,55.68 582.0,55.80 582.5,55.20 583.0,55.04 583.5,55.21 584.0,55.22 584.5,55.45 585.0,55.65 585.5,55.21 586.0,55.69 586.5,55.25 587.0,55.51 587.5,55.05 588.0,55.64 588.5,55.02 589.0,55.60 589.0,59.13 588.5,59.15 588.0,58.82 587.5,59.08 587.0,59.15 586.5,59.26 586.0,58.76 585.5,58.73 585.0,58.83 584.5,58.62 584.0,59.39 583.5,58.67 583.0,59.33 582.5,58.83 582.0,58.65 581.5,59.34 581.0,59.12 580.5,59.45 580.0,59.10 579.5,58.87 579.0,58.73 578.5,59.38 578.0,60.20 577.5,59.43 577.0,59.00 576.5,59.36 576.0,58.59 575.5,58.87 575.0,59.28 574.5,58.61 574.0,58.82 573.5,58.55 573.0,59.03 572.5,59.87 572.0,60.81 571.5,59.77 571.0,61.20 570.5,59.77 570.0,59.42 569.5,58.61 569.0,59.54 568.5,58.77 568.0,59.18 567.5,58.91 567.0,59.85 566.5,58.61 566.0,58.82 565.5,59.77 565.0,61.20 564.5,59.77 564.0,59.36 563.5,59.26 563.0,60.55 562.5,59.17 562.0,59.32 561.5,59.45 561.0,59.25 560.5,59.90 560.0,58.92 559.5,59.09 559.0,59.30 558.5,59.35 558.0,58.85 557.5,58.79 557.0,58.71 556.5,58.90 556.0,58.97 555.5,58.56 555.0,59.08 554.5,59.21 554.0,58.83 553.5,59.40 553.0,58.71 552.5,58.62 552.0,58.72 551.5,59.07 551.0,59.36 550.5,59.29 550.0,59.09 549.5,59.44 549.0,58.79 548.5,59.05 548.0,59.36 547.5,60.42 547.0,58.97 546.5,59.39 546.0,59.18 545.5,58.77 545.0,58.73 544.5,59.40 544.0,59.30 543.5,59.01 543.0,59.19 542.5,59.86 542.0,61.09 541.5,59.24 541.0,59.10 540.5,59.26 540.0,58.89 539.5,59.14 539.0,58.85 538.5,59.10 538.0,59.26 537.5,59.18 537.0,58.56 536.5,58.85 536.0,59.29 535.5,59.13 535.0,58.93 534.5,58.62 534.0,58.66 533.5,59.51 533.0,59.27 532.5,58.91 532.0,59.19 531.5,58.63 531.0,58.63 530.5,58.85 530.0,59.06 529.5,59.21 529.0,59.07 528.5,59.58 528.0,59.22 527.5,59.44 527.0,59.17 526.5,59.08 526.0,59.94 525.5,60.19 525.0,59.97 524.5,59.26 524.0,59.57 523.5,59.91 523.0,59.28 522.5,59.61 522.0,59.64 521.5,59.19 521.0,59.19 520.5,61.02 520.0,61.20 519.5,59.77 519.0,58.95 518.5,59.31 518.0,59.18 517.5,59.50 517.0,59.37 516.5,58.96 516.0,59.15 515.5,59.75 515.0,59.75 514.5,59.70 514.0,59.44 513.5,59.94 513.0,59.42 512.5,59.14 512.0,59.64 511.5,59.99 511.0,59.73 510.5,59.37 510.0,59.11 509.5,61.03 509.0,59.42 508.5,62.79 508.0,63.38 507.5,59.96 507.0,59.90 506.5,59.23 506.0,59.83 505.5,59.38 505.0,59.76 504.5,59.79 504.0,61.98 503.5,61.06 503.0,59.64 502.5,59.09 502.0,59.08 501.5,59.85 501.0,59.35 500.5,59.77 500.0,61.20 499.5,59.77 499.0,61.72 498.5,62.27 498.0,59.03 497.5,59.94 497.0,59.01 496.5,59.31 496.0,59.63 495.5,59.55 495.0,59.83 494.5,60.08 494.0,59.91 493.5,59.59 493.0,61.51 492.5,65.46 492.0,61.65 491.5,59.50 491.0,60.03 490.5,60.03 490.0,59.38 489.5,60.01 489.0,60.72 488.5,60.20 488.0,59.18 487.5,60.06 487.0,59.16 486.5,59.89 486.0,59.78 485.5,59.72 485.0,59.43 484.5,60.02 484.0,59.78 483.5,60.48 483.0,59.78 482.5,59.56 482.0,61.53 481.5,62.42 481.0,60.19 480.5,59.57 480.0,61.69 479.5,60.22 479.0,60.25 478.5,59.79 478.0,59.22 477.5,59.98 477.0,59.25 476.5,59.94 476.0,59.45 475.5,59.90 475.0,59.17 474.5,58.82 474.0,58.99 473.5,58.62 473.0,59.34 472.5,58.88 472.0,59.38 471.5,59.81 471.0,59.48 470.5,58.88 470.0,58.78 469.5,58.74 469.0,59.11 468.5,58.66 468.0,59.30 467.5,58.86 467.0,58.98 466.5,59.12 466.0,59.16 465.5,58.62 465.0,58.64 464.5,58.93 464.0,58.81 463.5,59.34 463.0,59.43 462.5,58.72 462.0,59.12 461.5,59.06 461.0,58.79 460.5,59.11 460.0,62.21 459.5,61.28 459.0,60.88 458.5,60.25 458.0,63.75 457.5,59.89 457.0,60.45 456.5,59.64 456.0,59.53 455.5,60.13 455.0,63.79 454.5,61.74 454.0,60.15 453.5,60.86 453.0,59.82 452.5,60.41 452.0,62.20 451.5,60.87 451.0,59.53 450.5,60.80 450.0,60.58 449.5,59.51 449.0,63.33 448.5,60.52 448.0,60.29 447.5,59.88 447.0,60.35 446.5,60.08 446.0,59.54 445.5,61.06 445.0,63.20 444.5,61.06 444.0,60.59 443.5,59.56 443.0,60.41 442.5,60.30 442.0,60.21 441.5,60.81 441.0,59.60 440.5,59.74 440.0,60.05 439.5,60.56 439.0,59.48 438.5,61.06 438.0,63.20 437.5,61.06 437.0,60.30 436.5,59.96 436.0,60.87 435.5,60.39 435.0,61.05 434.5,60.15 434.0,59.56 433.5,60.06 433.0,61.04 432.5,61.70 432.0,61.68 431.5,61.98 431.0,60.82 430.5,61.70 430.0,64.20 429.5,61.70 429.0,62.81 428.5,61.67 428.0,59.47 427.5,59.70 427.0,60.88 426.5,60.13 426.0,60.72 425.5,61.06 425.0,63.20 424.5,61.06 424.0,60.60 423.5,62.71 423.0,61.12 422.5,60.94 422.0,59.76 421.5,59.67 421.0,60.22 420.5,59.51 420.0,59.82 419.5,61.34 419.0,61.15 418.5,62.34 418.0,65.20 417.5,62.34 417.0,61.02 416.5,60.05 416.0,60.56 415.5,59.99 415.0,61.10 414.5,60.06 414.0,61.57 413.5,61.70 413.0,64.20 412.5,61.70 412.0,60.23 411.5,60.90 411.0,60.75 410.5,60.93 410.0,60.10 409.5,64.04 409.0,64.00 408.5,68.13 408.0,74.20 407.5,68.13 407.0,62.06 406.5,60.39 406.0,60.22 405.5,59.86 405.0,60.05 404.5,60.91 404.0,60.38 403.5,61.40 403.0,60.58 402.5,60.65 402.0,61.44 401.5,62.34 401.0,65.20 400.5,66.04 400.0,61.23 399.5,61.03 399.0,60.10 398.5,61.01 398.0,60.43 397.5,61.05 397.0,65.56 396.5,70.20 396.0,65.56 395.5,61.11 395.0,61.04 394.5,61.43 394.0,61.05 393.5,60.21 393.0,60.99 392.5,63.35 392.0,61.42 391.5,61.70 391.0,64.20 390.5,61.70 390.0,60.17 389.5,61.80 389.0,61.51 388.5,60.89 388.0,60.71 387.5,64.34 387.0,67.26 386.5,64.91 386.0,69.20 385.5,66.11 385.0,67.30 384.5,62.64 384.0,64.48 383.5,61.56 383.0,61.13 382.5,61.78 382.0,60.91 381.5,62.99 381.0,66.20 380.5,62.99 380.0,60.13 379.5,60.49 379.0,60.60 378.5,60.16 378.0,59.92 377.5,59.38 377.0,59.41 376.5,60.40 376.0,61.15 375.5,59.73 375.0,59.21 374.5,59.75 374.0,62.37 373.5,60.60 373.0,60.18 372.5,59.89 372.0,59.20 371.5,59.19 371.0,59.74 370.5,60.24 370.0,59.79 369.5,59.69 369.0,59.51 368.5,59.37 368.0,60.39 367.5,60.25 367.0,59.80 366.5,59.56 366.0,59.65 365.5,60.34 365.0,59.71 364.5,60.02 364.0,60.31 363.5,60.82 363.0,59.37 362.5,60.03 362.0,59.16 361.5,61.07 361.0,61.17 360.5,61.06 360.0,63.20 359.5,61.06 359.0,60.94 358.5,63.07 358.0,60.85 357.5,61.01 357.0,61.74 356.5,65.56 356.0,70.20 355.5,65.56 355.0,60.91 354.5,60.99 354.0,65.30 353.5,62.34 353.0,65.20 352.5,62.34 352.0,62.72 351.5,65.27 351.0,62.35 350.5,62.34 350.0,65.20 349.5,62.37 349.0,59.85 348.5,62.34 348.0,65.20 347.5,62.34 347.0,60.38 346.5,61.95 346.0,59.97 345.5,62.99 345.0,66.20 344.5,62.99 344.0,60.96 343.5,59.97 343.0,60.75 342.5,60.53 342.0,61.95 341.5,62.00 341.0,61.14 340.5,62.34 340.0,65.20 339.5,62.34 339.0,63.04 338.5,61.72 338.0,60.91 337.5,60.44 337.0,63.28 336.5,60.37 336.0,60.33 335.5,60.56 335.0,60.53 334.5,59.25 334.0,59.58 333.5,60.62 333.0,62.82 332.5,61.70 332.0,64.20 331.5,61.70 331.0,60.19 330.5,59.50 330.0,59.70 329.5,59.99 329.0,60.10 328.5,61.06 328.0,63.20 327.5,61.06 327.0,59.81 326.5,60.14 326.0,59.58 325.5,59.50 325.0,59.97 324.5,59.67 324.0,59.76 323.5,60.32 323.0,61.25 322.5,59.65 322.0,59.67 321.5,59.24 321.0,59.45 320.5,60.07 320.0,60.44 319.5,60.76 319.0,61.52 318.5,62.34 318.0,65.20 317.5,62.34 317.0,62.50 316.5,63.90 316.0,62.83 315.5,62.82 315.0,65.20 314.5,62.67 314.0,61.82 313.5,60.81 313.0,61.79 312.5,61.22 312.0,61.37 311.5,67.53 311.0,61.32" fill="#050505"/><polygon points="311.0,137.59 311.5,136.64 312.0,137.66 312.5,137.01 313.0,133.80 313.5,137.01 314.0,138.51 314.5,137.17 315.0,138.06 315.5,137.65 316.0,137.34 316.5,136.61 317.0,138.65 317.5,136.02 318.0,137.04 318.5,137.67 319.0,137.66 319.5,137.00 320.0,137.81 320.5,137.26 321.0,138.53 321.5,137.98 322.0,139.93 322.5,139.85 323.0,140.57 323.5,138.95 324.0,139.89 324.5,139.08 325.0,139.94 325.5,140.85 326.0,140.87 326.5,140.23 327.0,140.13 327.5,139.76 328.0,140.20 328.5,140.00 329.0,140.08 329.5,139.23 330.0,139.95 330.5,139.99 331.0,140.37 331.5,140.78 332.0,140.01 332.5,140.78 333.0,140.09 333.5,140.78 334.0,140.54 334.5,140.22 335.0,140.04 335.5,140.25 336.0,140.77 336.5,140.33 337.0,140.39 337.5,140.08 338.0,139.81 338.5,139.97 339.0,139.64 339.5,136.54 340.0,138.51 340.5,133.16 341.0,127.80 341.5,133.16 342.0,138.51 342.5,139.21 343.0,137.73 343.5,137.21 344.0,134.36 344.5,137.26 345.0,140.45 345.5,139.98 346.0,138.23 346.5,132.51 347.0,126.80 347.5,132.51 348.0,130.48 348.5,135.02 349.0,140.50 349.5,134.88 350.0,130.45 350.5,136.57 351.0,131.92 351.5,135.73 352.0,131.80 352.5,135.73 353.0,139.40 353.5,139.20 354.0,139.52 354.5,139.12 355.0,138.26 355.5,139.09 356.0,135.84 356.5,137.01 357.0,133.80 357.5,137.01 358.0,140.14 358.5,140.13 359.0,139.24 359.5,139.26 360.0,139.64 360.5,139.45 361.0,139.56 361.5,139.39 362.0,141.25 362.5,140.94 363.0,141.07 363.5,140.93 364.0,140.36 364.5,140.73 365.0,141.07 365.5,141.19 366.0,140.64 366.5,140.40 367.0,140.73 367.5,140.31 368.0,140.43 368.5,140.63 369.0,141.27 369.5,140.32 370.0,140.44 370.5,140.78 371.0,140.77 371.5,140.77 372.0,140.80 372.5,140.59 373.0,140.81 373.5,140.81 374.0,140.33 374.5,141.17 375.0,140.96 375.5,140.36 376.0,140.35 376.5,140.44 377.0,141.28 377.5,140.71 378.0,140.69 378.5,140.37 379.0,140.78 379.5,141.27 380.0,140.43 380.5,141.28 381.0,140.01 381.5,140.78 382.0,134.37 382.5,130.52 383.0,138.79 383.5,137.76 384.0,129.30 384.5,136.74 385.0,137.09 385.5,129.94 386.0,122.80 386.5,129.94 387.0,137.09 387.5,139.73 388.0,138.80 388.5,135.09 389.0,130.80 389.5,135.09 390.0,139.37 390.5,139.65 391.0,138.90 391.5,138.79 392.0,130.15 392.5,137.19 393.0,139.45 393.5,139.53 394.0,132.77 394.5,123.69 395.0,129.94 395.5,139.01 396.0,137.09 396.5,129.94 397.0,122.80 397.5,129.94 398.0,137.09 398.5,138.57 399.0,136.41 399.5,133.28 400.0,138.06 400.5,140.34 401.0,139.13 401.5,140.35 402.0,139.23 402.5,139.13 403.0,139.94 403.5,140.14 404.0,140.44 404.5,140.03 405.0,140.09 405.5,140.37 406.0,139.74 406.5,139.41 407.0,137.94 407.5,133.16 408.0,127.80 408.5,133.16 409.0,134.44 409.5,137.64 410.0,139.36 410.5,139.86 411.0,139.28 411.5,140.26 412.0,139.08 412.5,139.41 413.0,138.50 413.5,138.36 414.0,140.22 414.5,138.08 415.0,139.52 415.5,140.64 416.0,141.13 416.5,139.83 417.0,137.89 417.5,140.03 418.0,140.80 418.5,140.18 419.0,140.69 419.5,140.64 420.0,139.98 420.5,140.04 421.0,140.18 421.5,140.59 422.0,140.83 422.5,140.35 423.0,140.51 423.5,140.11 424.0,141.04 424.5,140.77 425.0,140.60 425.5,140.58 426.0,139.66 426.5,135.73 427.0,131.80 427.5,135.73 428.0,139.66 428.5,140.08 429.0,140.66 429.5,140.27 430.0,140.24 430.5,140.87 431.0,140.60 431.5,140.54 432.0,140.61 432.5,140.83 433.0,140.60 433.5,140.93 434.0,140.23 434.5,140.07 435.0,140.40 435.5,140.37 436.0,140.27 436.5,140.25 437.0,140.39 437.5,141.12 438.0,140.77 438.5,140.48 439.0,140.12 439.5,140.59 440.0,141.03 440.5,140.19 441.0,140.95 441.5,140.32 442.0,140.46 442.5,140.35 443.0,140.20 443.5,140.29 444.0,140.52 444.5,138.64 445.0,136.62 445.5,137.62 446.0,140.27 446.5,140.43 447.0,140.39 447.5,140.80 448.0,140.94 448.5,140.40 449.0,140.79 449.5,139.26 450.0,137.38 450.5,140.09 451.0,139.29 451.5,139.30 452.0,137.80 452.5,139.59 453.0,140.33 453.5,140.93 454.0,140.88 454.5,141.07 455.0,140.76 455.5,140.11 456.0,140.69 456.5,140.89 457.0,140.10 457.5,140.67 458.0,140.31 458.5,140.44 459.0,140.16 459.5,138.03 460.0,140.98 460.5,140.06 461.0,141.05 461.5,141.20 462.0,140.80 462.5,140.76 463.0,140.81 463.5,141.06 464.0,141.02 464.5,140.65 465.0,141.39 465.5,140.82 466.0,141.33 466.5,140.93 467.0,141.09 467.5,140.84 468.0,141.41 468.5,141.33 469.0,141.02 469.5,141.38 470.0,141.03 470.5,140.59 471.0,141.01 471.5,141.17 472.0,141.34 472.5,141.25 473.0,140.99 473.5,140.40 474.0,141.22 474.5,140.81 475.0,140.93 475.5,140.85 476.0,140.68 476.5,141.00 477.0,139.72 477.5,140.39 478.0,140.92 478.5,140.32 479.0,140.90 479.5,140.23 480.0,138.80 480.5,140.23 481.0,140.86 481.5,140.62 482.0,140.73 482.5,140.87 483.0,140.85 483.5,140.53 484.0,140.69 484.5,140.90 485.0,141.10 485.5,141.24 486.0,140.48 486.5,140.91 487.0,140.59 487.5,140.55 488.0,141.05 488.5,140.74 489.0,140.31 489.5,140.52 490.0,140.57 490.5,141.03 491.0,140.77 491.5,141.13 492.0,140.41 492.5,140.82 493.0,140.88 493.5,140.69 494.0,140.77 494.5,140.73 495.0,141.60 495.5,141.78 496.0,141.38 496.5,141.29 497.0,141.65 497.5,141.48 498.0,141.58 498.5,141.73 499.0,141.26 499.5,141.66 500.0,141.75 500.5,141.31 501.0,141.65 501.5,141.01 502.0,139.80 502.5,141.17 503.0,141.37 503.5,141.25 504.0,141.52 504.5,141.54 505.0,141.45 505.5,141.18 506.0,141.68 506.5,141.73 507.0,141.60 507.5,141.54 508.0,141.23 508.5,141.71 509.0,140.82 509.5,140.97 510.0,141.68 510.5,141.68 511.0,141.79 511.5,141.78 512.0,141.47 512.5,141.76 513.0,141.60 513.5,141.43 514.0,141.78 514.5,141.81 515.0,141.71 515.5,141.39 516.0,140.89 516.5,141.64 517.0,141.59 517.5,141.66 518.0,141.66 518.5,141.62 519.0,141.65 519.5,141.28 520.0,141.49 520.5,141.25 521.0,141.42 521.5,141.37 522.0,141.56 522.5,141.50 523.0,141.48 523.5,141.31 524.0,141.68 524.5,141.63 525.0,141.31 525.5,141.64 526.0,141.26 526.5,140.70 527.0,140.91 527.5,141.57 528.0,141.25 528.5,141.23 529.0,141.78 529.5,141.19 530.0,141.49 530.5,141.26 531.0,141.18 531.5,141.18 532.0,141.73 532.5,141.41 533.0,141.46 533.5,141.54 534.0,141.44 534.5,141.71 535.0,141.24 535.5,140.34 536.0,141.28 536.5,141.45 537.0,140.70 537.5,141.40 538.0,141.78 538.5,141.61 539.0,141.46 539.5,141.41 540.0,141.30 540.5,141.33 541.0,141.80 541.5,141.73 542.0,141.81 542.5,141.52 543.0,141.62 543.5,141.29 544.0,141.41 544.5,140.90 545.0,141.35 545.5,140.07 546.0,140.71 546.5,141.50 547.0,141.67 547.5,141.23 548.0,141.78 548.5,141.67 549.0,141.28 549.5,141.19 550.0,141.42 550.5,141.36 551.0,141.79 551.5,141.50 552.0,141.79 552.5,141.19 553.0,141.61 553.5,141.44 554.0,141.71 554.5,141.50 555.0,141.46 555.5,141.70 556.0,141.77 556.5,141.80 557.0,141.52 557.5,141.42 558.0,141.33 558.5,141.79 559.0,141.73 559.5,141.80 560.0,141.25 560.5,141.77 561.0,141.27 561.5,141.23 562.0,141.75 562.5,141.70 563.0,141.66 563.5,141.57 564.0,141.48 564.5,141.73 565.0,141.49 565.5,141.52 566.0,141.43 566.5,141.61 567.0,141.25 567.5,141.57 568.0,141.21 568.5,141.09 569.0,141.46 569.5,141.23 570.0,141.64 570.5,141.34 571.0,141.37 571.5,141.70 572.0,141.27 572.5,141.75 573.0,141.34 573.5,141.47 574.0,141.20 574.5,141.45 575.0,141.18 575.5,141.40 576.0,141.73 576.5,141.46 577.0,141.32 577.5,141.42 578.0,141.62 578.5,141.70 579.0,141.27 579.5,141.65 580.0,141.37 580.5,141.27 581.0,141.46 581.5,141.82 582.0,141.52 582.5,141.65 583.0,141.41 583.5,141.36 584.0,141.51 584.5,141.27 585.0,140.17 585.5,141.30 586.0,141.34 586.5,141.38 587.0,140.74 587.5,141.58 588.0,141.72 588.5,141.23 589.0,141.35 589.0,144.53 588.5,144.77 588.0,143.80 587.5,144.27 587.0,145.28 586.5,144.08 586.0,144.08 585.5,144.26 585.0,145.35 584.5,144.38 584.0,144.24 583.5,143.93 583.0,143.82 582.5,144.42 582.0,144.81 581.5,143.78 581.0,144.00 580.5,143.90 580.0,143.90 579.5,144.01 579.0,144.42 578.5,144.07 578.0,144.17 577.5,143.96 577.0,143.82 576.5,143.86 576.0,144.04 575.5,144.40 575.0,144.32 574.5,144.35 574.0,144.36 573.5,144.19 573.0,144.34 572.5,144.41 572.0,144.27 571.5,144.03 571.0,144.38 570.5,144.28 570.0,143.97 569.5,143.80 569.0,144.23 568.5,144.24 568.0,143.86 567.5,144.13 567.0,144.16 566.5,143.78 566.0,143.90 565.5,143.80 565.0,144.03 564.5,144.14 564.0,144.02 563.5,144.01 563.0,144.19 562.5,143.85 562.0,143.96 561.5,143.80 561.0,144.17 560.5,143.81 560.0,144.02 559.5,143.79 559.0,143.88 558.5,144.31 558.0,144.24 557.5,144.26 557.0,144.32 556.5,143.90 556.0,144.34 555.5,144.25 555.0,143.93 554.5,144.27 554.0,144.10 553.5,144.37 553.0,143.87 552.5,144.02 552.0,143.79 551.5,144.12 551.0,144.09 550.5,144.10 550.0,144.02 549.5,144.21 549.0,144.23 548.5,143.96 548.0,143.90 547.5,144.21 547.0,143.96 546.5,144.40 546.0,144.55 545.5,145.08 545.0,144.02 544.5,144.49 544.0,144.17 543.5,143.89 543.0,143.94 542.5,144.40 542.0,143.88 541.5,143.91 541.0,144.29 540.5,143.81 540.0,144.25 539.5,143.95 539.0,143.84 538.5,144.40 538.0,144.27 537.5,144.23 537.0,145.13 536.5,144.19 536.0,144.24 535.5,145.12 535.0,144.21 534.5,144.08 534.0,144.15 533.5,144.27 533.0,144.39 532.5,143.85 532.0,144.03 531.5,143.78 531.0,143.82 530.5,144.11 530.0,143.98 529.5,144.13 529.0,143.94 528.5,144.32 528.0,144.42 527.5,144.13 527.0,144.40 526.5,144.58 526.0,144.32 525.5,143.90 525.0,144.18 524.5,143.80 524.0,143.79 523.5,144.36 523.0,144.12 522.5,144.08 522.0,144.03 521.5,144.10 521.0,144.20 520.5,144.27 520.0,143.98 519.5,144.08 519.0,143.85 518.5,144.16 518.0,143.79 517.5,143.96 517.0,144.01 516.5,144.14 516.0,144.08 515.5,144.23 515.0,143.95 514.5,144.23 514.0,143.84 513.5,144.34 513.0,144.42 512.5,143.80 512.0,144.15 511.5,144.32 511.0,144.23 510.5,144.24 510.0,144.10 509.5,145.46 509.0,145.67 508.5,144.31 508.0,144.22 507.5,144.31 507.0,144.06 506.5,144.40 506.0,144.18 505.5,143.92 505.0,144.17 504.5,144.30 504.0,143.98 503.5,143.92 503.0,143.99 502.5,144.24 502.0,145.46 501.5,144.38 501.0,144.09 500.5,144.26 500.0,143.83 499.5,143.89 499.0,144.38 498.5,143.98 498.0,144.20 497.5,143.79 497.0,144.01 496.5,144.02 496.0,144.22 495.5,143.97 495.0,144.27 494.5,145.25 494.0,145.29 493.5,144.76 493.0,144.45 492.5,145.11 492.0,144.96 491.5,144.93 491.0,144.80 490.5,144.87 490.0,145.25 489.5,144.62 489.0,144.44 488.5,144.84 488.0,145.01 487.5,144.88 487.0,145.06 486.5,144.89 486.0,145.14 485.5,144.88 485.0,145.21 484.5,145.29 484.0,144.52 483.5,144.56 483.0,144.72 482.5,145.73 482.0,146.11 481.5,146.28 481.0,144.95 480.5,145.37 480.0,146.80 479.5,145.37 479.0,144.97 478.5,145.09 478.0,145.20 477.5,144.92 477.0,145.50 476.5,145.07 476.0,144.71 475.5,144.62 475.0,144.74 474.5,144.55 474.0,144.86 473.5,145.57 473.0,144.52 472.5,144.93 472.0,144.42 471.5,145.04 471.0,144.68 470.5,144.92 470.0,144.25 469.5,144.50 469.0,144.17 468.5,144.20 468.0,144.79 467.5,144.70 467.0,144.73 466.5,144.82 466.0,144.53 465.5,144.54 465.0,144.39 464.5,144.20 464.0,145.01 463.5,144.25 463.0,144.56 462.5,144.73 462.0,144.44 461.5,144.80 461.0,144.65 460.5,145.32 460.0,144.32 459.5,147.78 459.0,145.48 458.5,145.48 458.0,145.06 457.5,145.20 457.0,144.58 456.5,144.97 456.0,144.90 455.5,145.15 455.0,145.03 454.5,144.51 454.0,144.81 453.5,145.09 453.0,144.72 452.5,146.66 452.0,148.80 451.5,146.66 451.0,146.70 450.5,145.30 450.0,146.91 449.5,145.49 449.0,145.47 448.5,145.49 448.0,145.16 447.5,144.75 447.0,145.02 446.5,145.30 446.0,144.70 445.5,146.77 445.0,149.70 444.5,147.71 444.0,145.49 443.5,145.41 443.0,145.30 442.5,144.51 442.0,144.59 441.5,145.53 441.0,145.21 440.5,144.79 440.0,145.53 439.5,145.18 439.0,145.16 438.5,145.45 438.0,145.32 437.5,145.01 437.0,145.46 436.5,144.78 436.0,144.64 435.5,145.34 435.0,145.33 434.5,145.46 434.0,145.33 433.5,144.69 433.0,144.83 432.5,145.38 432.0,144.98 431.5,145.49 431.0,144.92 430.5,145.44 430.0,145.33 429.5,144.71 429.0,144.54 428.5,144.76 428.0,146.51 427.5,151.16 427.0,155.80 426.5,151.16 426.0,146.51 425.5,144.87 425.0,145.46 424.5,145.07 424.0,145.21 423.5,144.76 423.0,144.62 422.5,144.71 422.0,144.64 421.5,145.53 421.0,144.63 420.5,145.66 420.0,145.71 419.5,144.82 419.0,145.04 418.5,145.09 418.0,145.11 417.5,146.59 417.0,149.51 416.5,146.86 416.0,144.78 415.5,144.74 415.0,148.38 414.5,150.83 414.0,147.19 413.5,146.15 413.0,145.92 412.5,145.65 412.0,145.09 411.5,146.47 411.0,145.75 410.5,145.95 410.0,146.51 409.5,149.51 409.0,153.67 408.5,152.44 408.0,157.80 407.5,152.44 407.0,147.57 406.5,145.84 406.0,145.90 405.5,145.84 405.0,145.32 404.5,145.12 404.0,145.33 403.5,146.46 403.0,147.12 402.5,145.73 402.0,146.14 401.5,146.07 401.0,145.34 400.5,146.12 400.0,148.03 399.5,153.30 399.0,149.85 398.5,145.68 398.0,149.09 397.5,156.94 397.0,164.80 396.5,156.94 396.0,149.09 395.5,146.81 395.0,155.99 394.5,162.40 394.0,153.09 393.5,146.05 393.0,147.16 392.5,147.09 392.0,152.47 391.5,146.37 391.0,146.60 390.5,146.00 390.0,145.83 389.5,147.94 389.0,150.80 388.5,147.94 388.0,146.01 387.5,146.26 387.0,147.09 386.5,152.44 386.0,157.80 385.5,152.44 385.0,147.66 384.5,149.35 384.0,157.38 383.5,148.25 383.0,147.13 382.5,153.29 382.0,150.01 381.5,144.88 381.0,145.71 380.5,144.33 380.0,145.26 379.5,144.41 379.0,145.26 378.5,144.39 378.0,144.91 377.5,144.99 377.0,144.79 376.5,145.23 376.0,145.23 375.5,145.28 375.0,145.00 374.5,144.60 374.0,144.86 373.5,144.86 373.0,144.38 372.5,144.72 372.0,144.50 371.5,144.65 371.0,144.48 370.5,144.38 370.0,145.08 369.5,144.99 369.0,144.87 368.5,144.37 368.0,144.36 367.5,144.61 367.0,144.42 366.5,144.40 366.0,144.37 365.5,145.24 365.0,145.25 364.5,144.65 364.0,144.81 363.5,145.03 363.0,144.75 362.5,145.09 362.0,145.24 361.5,145.44 361.0,146.43 360.5,145.85 360.0,145.87 359.5,146.33 359.0,145.29 358.5,145.81 358.0,145.66 357.5,149.23 357.0,152.80 356.5,149.23 356.0,148.67 355.5,145.96 355.0,146.67 354.5,146.13 354.0,145.60 353.5,146.44 353.0,145.92 352.5,148.59 352.0,151.80 351.5,148.59 351.0,150.72 350.5,147.33 350.0,150.91 349.5,148.00 349.0,146.10 348.5,150.67 348.0,155.25 347.5,151.16 347.0,155.80 346.5,151.16 346.0,146.51 345.5,146.12 345.0,146.29 344.5,150.71 344.0,154.85 343.5,151.80 343.0,146.25 342.5,145.77 342.0,146.23 341.5,150.51 341.0,154.80 340.5,150.51 340.0,146.23 339.5,147.21 339.0,146.16 338.5,146.22 338.0,146.08 337.5,145.84 337.0,145.15 336.5,144.71 336.0,145.77 335.5,145.72 335.0,145.19 334.5,145.83 334.0,145.87 333.5,144.82 333.0,145.36 332.5,145.72 332.0,144.76 331.5,145.07 331.0,145.22 330.5,145.15 330.0,145.23 329.5,145.70 329.0,145.90 328.5,145.20 328.0,144.68 327.5,145.62 327.0,144.70 326.5,145.83 326.0,145.46 325.5,145.63 325.0,145.48 324.5,145.70 324.0,145.09 323.5,145.91 323.0,145.52 322.5,145.18 322.0,145.21 321.5,147.67 321.0,147.18 320.5,149.00 320.0,148.29 319.5,148.55 319.0,147.75 318.5,148.57 318.0,149.57 317.5,146.94 317.0,148.04 316.5,148.27 316.0,147.56 315.5,147.79 315.0,147.20 314.5,148.02 314.0,148.38 313.5,149.22 313.0,148.80 312.5,147.91 312.0,148.11 311.5,147.64 311.0,147.75" fill="#050505"/><rect x="322.6" y="32.5" width="1" height="47.5" fill="#000" opacity="0.7"/><rect x="336" y="14" width="1" height="86" fill="#000" opacity="0.35"/><rect x="343" y="14" width="1" height="86" fill="#000" opacity="0.35"/><rect x="356" y="30.7" width="1" height="39.0" fill="#000" opacity="0.7"/><rect x="388" y="14" width="1" height="86" fill="#000" opacity="0.5"/><rect x="434" y="29.8" width="1" height="55.60000000000001" fill="#000" opacity="0.65"/><rect x="381.7" y="14" width="1" height="172" fill="#5ab0c8" opacity="0.85"/><text x="333.5" y="175.3" font-size="19.5" fill="#e8e04a" text-anchor="middle" stroke="#e8e04a" stroke-width="0.35">2</text><text x="315" y="193.8" font-size="7.6" fill="#3592e0" text-anchor="start" textLength="36.5" lengthAdjust="spacingAndGlyphs" stroke="#3592e0" stroke-width="0.15">00:00:02:14</text><text x="583.4000000000001" y="193.8" font-size="7.6" fill="#c4c4c4" text-anchor="end" textLength="36.4" lengthAdjust="spacingAndGlyphs" stroke="#c8c8c8" stroke-width="0.15">00:00:02:19</text><g transform="translate(537.2,191.5) scale(0.85)"><path d="M-0.5,-0.5 L3,3" stroke="#a4a4a4" stroke-width="1.9" stroke-linecap="round"/><circle cx="-1.6" cy="-1.6" r="2.4" fill="#a4a4a4"/><path d="M-4.6,-3.2 L-2.3,-0.9 L-0.9,-2.3 L-3.2,-4.6 Z" fill="#262626"/></g><rect x="435" y="187.3" width="6" height="8" fill="#a4a4a4"/><rect x="436" y="188.3" width="4" height="2.5" fill="#333"/><rect x="436" y="191.8" width="4" height="2.5" fill="#333"/><rect x="446.6" y="190.60000000000002" width="2" height="1.4" fill="#a4a4a4"/><rect x="449.4" y="188.70000000000002" width="1.2" height="5.2" fill="#a4a4a4"/><path d="M451.2,189.60000000000002 L453.6,191.3 L451.2,193.0 Z" fill="#a4a4a4"/><rect x="310.85" y="204.3" width="0.8" height="1.3" fill="#5a5a5a"/><rect x="324.57000000000005" y="204.3" width="0.8" height="1.3" fill="#5a5a5a"/><rect x="338.29" y="204.3" width="0.8" height="1.3" fill="#5a5a5a"/><rect x="352.01000000000005" y="204.3" width="0.8" height="1.3" fill="#5a5a5a"/><rect x="365.73" y="204.3" width="0.8" height="1.3" fill="#5a5a5a"/><rect x="379.45000000000005" y="204.3" width="0.8" height="1.3" fill="#5a5a5a"/><rect x="393.17" y="204.3" width="0.8" height="1.3" fill="#5a5a5a"/><rect x="406.89000000000004" y="204.3" width="0.8" height="1.3" fill="#5a5a5a"/><rect x="420.61" y="204.3" width="0.8" height="1.3" fill="#5a5a5a"/><rect x="434.33000000000004" y="204.3" width="0.8" height="1.3" fill="#5a5a5a"/><rect x="448.05000000000007" y="204.3" width="0.8" height="1.3" fill="#5a5a5a"/><rect x="461.77000000000004" y="204.3" width="0.8" height="1.3" fill="#5a5a5a"/><rect x="475.49" y="204.3" width="0.8" height="1.3" fill="#5a5a5a"/><rect x="489.21000000000004" y="204.3" width="0.8" height="1.3" fill="#5a5a5a"/><rect x="502.93000000000006" y="204.3" width="0.8" height="1.3" fill="#5a5a5a"/><rect x="516.65" y="204.3" width="0.8" height="1.3" fill="#5a5a5a"/><rect x="530.37" y="204.3" width="0.8" height="1.3" fill="#5a5a5a"/><rect x="544.09" y="204.3" width="0.8" height="1.3" fill="#5a5a5a"/><rect x="557.8100000000001" y="204.3" width="0.8" height="1.3" fill="#5a5a5a"/><rect x="571.5300000000001" y="204.3" width="0.8" height="1.3" fill="#5a5a5a"/><rect x="585.2" y="200.8" width="0.8" height="5" fill="#5a5a5a"/><rect x="397" y="197.3" width="77" height="9" fill="#474747" /><rect x="396.5" y="197.3" width="1" height="9" fill="#3a86c2"/><rect x="473.5" y="197.3" width="1" height="9" fill="#3a86c2"/><rect x="434.3" y="201.3" width="2.5" height="2.5" fill="#2e2e2e" /><rect x="406.89000000000004" y="204.3" width="0.8" height="1.3" fill="#6a6a6a"/><rect x="420.61" y="204.3" width="0.8" height="1.3" fill="#6a6a6a"/><rect x="434.33000000000004" y="204.3" width="0.8" height="1.3" fill="#6a6a6a"/><rect x="448.05000000000007" y="204.3" width="0.8" height="1.3" fill="#6a6a6a"/><rect x="461.77000000000004" y="204.3" width="0.8" height="1.3" fill="#6a6a6a"/><path d="M379.2,200.3 h5 v3 l-2.5,2.2 l-2.5,-2.2 z" fill="#4aa8f0"/><rect x="311" y="206.3" width="278" height="1" fill="#1d1d1d" /><rect x="311" y="207.3" width="278" height="6.5" fill="#2b2b2b" /><rect x="311" y="213.8" width="278" height="1" fill="#1d1d1d" /><rect x="311" y="207.3" width="6" height="6.5" fill="#3c3c3c" /><rect x="583" y="207.3" width="6" height="6.5" fill="#3c3c3c" /><g transform="translate(365.8,221.10000000000002) scale(0.8)"><path d="M-2.5,-2.5 h5 v3 l-2.5,2.5 l-2.5,-2.5 z" fill="#a4a4a4"/></g><g transform="translate(383,221.10000000000002) scale(0.8)"><path d="M1.2,-3.5 h-0.6 q-0.6,0 -0.6,0.6 v2 l-1.0,0.9 l1.0,0.9 v2 q0,0.6 0.6,0.6 h0.6" stroke="#a4a4a4" stroke-width="1" fill="none"/></g><g transform="translate(397,221.10000000000002) scale(0.8)"><path d="M-1.2,-3.5 h0.6 q0.6,0 0.6,0.6 v2 l1.0,0.9 l-1.0,0.9 v2 q0,0.6 -0.6,0.6 h-0.6" stroke="#a4a4a4" stroke-width="1" fill="none"/></g><g transform="translate(418,221.10000000000002) scale(0.8)"><path d="M-1.8,-3.5 h-0.6 q-0.6,0 -0.6,0.6 v2 l-1.0,0.9 l1.0,0.9 v2 q0,0.6 0.6,0.6 h0.6" stroke="#a4a4a4" stroke-width="1" fill="none"/><path d="M-2,0 l3,-2.5 v1.7 h3 v1.6 h-3 v1.7 z" fill="#a4a4a4"/></g><g transform="translate(434,221.10000000000002) scale(0.8)"><path d="M-3.8,0 l4,-3.2 v6.4 z" fill="#a4a4a4"/><rect x="1.6" y="-3.2" width="1.5" height="6.4" fill="#a4a4a4"/></g><g transform="translate(449.5,221.10000000000002) scale(0.8)"><path d="M-2.5,-3.5 l6,3.5 l-6,3.5 z" fill="#a4a4a4"/></g><g transform="translate(465,221.10000000000002) scale(0.8)"><rect x="-3.1" y="-3.2" width="1.5" height="6.4" fill="#a4a4a4"/><path d="M-0.2,-3.2 l4,3.2 l-4,3.2 z" fill="#a4a4a4"/></g><g transform="translate(480.5,221.10000000000002) scale(0.8)"><path d="M-4,-0.8 h3 v-1.7 l3,2.5 l-3,2.5 v-1.7 h-3 z" fill="#a4a4a4"/><path d="M1.8,-3.5 h0.6 q0.6,0 0.6,0.6 v2 l1.0,0.9 l-1.0,0.9 v2 q0,0.6 -0.6,0.6 h-0.6" stroke="#a4a4a4" stroke-width="1" fill="none"/></g><g transform="translate(500.5,221.10000000000002) scale(1.0)"><rect x="-2.3" y="-3.4" width="4.6" height="2.6" fill="#6a6a6a"/><rect x="-0.6" y="-2.5" width="1.2" height="1.2" fill="#b8b8b8"/><rect x="-4.5" y="-1.3" width="4.2" height="4.1" fill="#a4a4a4"/><rect x="0.8" y="-1.3" width="3.8" height="4.1" fill="#a4a4a4"/><rect x="1.5" y="0" width="1.2" height="1.5" fill="#303030"/></g><g transform="translate(516.7,221.10000000000002) scale(1.0)"><rect x="-4.6" y="-0.3" width="9.2" height="3.1" fill="#a4a4a4"/><rect x="-2.4" y="-3.4" width="4.8" height="3.1" fill="#6a6a6a"/><rect x="-0.6" y="-2.5" width="1.2" height="1.2" fill="#c0c0c0"/></g><g transform="translate(532,221.10000000000002) scale(0.8)"><rect x="-4.6" y="-3.4" width="9.2" height="6.8" fill="none" stroke="#a4a4a4" stroke-width="1.6"/></g><g transform="translate(548.5,221.10000000000002) scale(1.0)"><path d="M-4.8,-1.9 L-1.5,0 L-4.8,1.9 Z M1.3,-1.9 L4.4,0 L1.3,1.9 Z" fill="#a4a4a4"/><rect x="-0.6" y="-3.9" width="1.2" height="1.5" fill="#a4a4a4"/><rect x="-0.6" y="-1.5" width="1.2" height="4.4" fill="#7a7a7a"/></g><g transform="translate(563.6,221.10000000000002) scale(1.0)"><path d="M-3.6,-1.2 V2.6 H3.6 V-1.2" stroke="#a4a4a4" stroke-width="1.3" fill="none"/><path d="M-0.4,-3.9 L2.9,-1.7 L-0.4,0.5 Z" fill="#a4a4a4"/><rect x="-1.2" y="-3.9" width="1.1" height="5.2" fill="#a4a4a4"/></g><path d="M578.2,216.90000000000003 l1.7,1.7 l-1.7,1.7 M580.6,216.90000000000003 l1.7,1.7 l-1.7,1.7" stroke="#b8b8b8" stroke-width="0.85" fill="none"/><path d="M585.9,221.90000000000003 h5.2 M588.5,219.3 v5.2" stroke="#d8d8d8" stroke-width="1.5"/><rect x="300.65" y="0.6" width="1.5" height="228.9" fill="#3d5262"/><rect x="415.65" y="0.6" width="1.5" height="12.200000000000001" fill="#3d5262"/><rect x="596.65" y="12.8" width="1.5" height="216.7" fill="#3d5262"/><rect x="300.65" y="0.09999999999999998" width="116.5" height="1" fill="#3580ac"/><rect x="415.65" y="12.3" width="182.49999999999997" height="1" fill="#2f74a0"/><rect x="300.65" y="229.0" width="297.5" height="1" fill="#276788"/><rect x="417" y="232.5" width="180" height="12.5" fill="#1e1e1e" /><rect x="301" y="232.5" width="116" height="13" fill="#2a2a2a" /><rect x="301" y="245.0" width="296" height="217" fill="#282828" /><text x="307.5" y="241.1" font-size="6.5" fill="#d4d4d4" text-anchor="start" textLength="96" lengthAdjust="spacingAndGlyphs" stroke="#d4d4d4" stroke-width="0.22">Source: Blue Star Space LONG-H264 MOV</text><rect x="409" y="236.0" width="2.6" height="5" fill="#8a8a8a"/><rect x="409" y="237.5" width="2.6" height="0.6" fill="#2a2a2a"/><rect x="409" y="239.1" width="2.6" height="0.6" fill="#2a2a2a"/><text x="411" y="253" font-size="5.8" fill="#9a9a9a" text-anchor="end" textLength="21" lengthAdjust="spacingAndGlyphs">Intensity:</text><text x="417" y="253" font-size="5.8" fill="#3a8fd6" text-anchor="start" >50</text><text x="427" y="253" font-size="5.8" fill="#c0c0c0" text-anchor="start" >%</text><rect x="436" y="246" width="0.8" height="9" fill="#4a4a4a" /><rect x="439.8" y="246.5" width="7.5" height="8" fill="#1c1c1c" /><path d="M441.5,250.8 l1.5,2 l3,-4.8" stroke="#f0f0f0" stroke-width="1" fill="none"/><text x="448.6" y="253" font-size="5.8" fill="#9a9aa8" text-anchor="start" textLength="17.5" lengthAdjust="spacingAndGlyphs">Chroma</text><rect x="470" y="246" width="0.8" height="9" fill="#4a4a4a" /><rect x="474" y="246.5" width="29" height="8" fill="#1e1e1e" /><text x="477.5" y="253" font-size="5.8" fill="#c8c8c8" text-anchor="start" textLength="11" lengthAdjust="spacingAndGlyphs">75%</text><path d="M497.0,249.2 h5 l-2.5,2.8 z" fill="#e0e0e0"/><rect x="343.2" y="256.6" width="214.9" height="161" fill="#1f1303" /><rect x="358" y="260.9" width="86" height="1" fill="#a06424"/><rect x="358" y="267.46999999999997" width="86" height="1" fill="#a06424"/><rect x="358" y="274.03999999999996" width="86" height="1" fill="#a06424"/><rect x="358" y="280.60999999999996" width="86" height="1" fill="#a06424"/><rect x="358" y="287.17999999999995" width="86" height="1" fill="#a06424"/><rect x="358" y="293.75" width="86" height="1" fill="#a06424"/><rect x="358" y="300.32" width="86" height="1" fill="#a06424"/><rect x="358" y="306.89" width="86" height="1" fill="#a06424"/><rect x="358" y="313.46" width="86" height="1" fill="#a06424"/><rect x="358" y="320.03" width="86" height="1" fill="#a06424"/><rect x="358" y="326.59999999999997" width="86" height="1" fill="#a06424"/><rect x="358" y="333.16999999999996" width="86" height="1" fill="#a06424"/><rect x="358.5" y="259" width="0.9" height="76" fill="#a06424"/><rect x="355" y="260.70000000000005" width="2" height="0.8" fill="#7a5a30"/><rect x="355" y="267.27000000000004" width="2" height="0.8" fill="#7a5a30"/><rect x="355" y="273.84000000000003" width="2" height="0.8" fill="#7a5a30"/><rect x="355" y="280.41" width="2" height="0.8" fill="#7a5a30"/><rect x="355" y="286.98" width="2" height="0.8" fill="#7a5a30"/><rect x="355" y="293.55000000000007" width="2" height="0.8" fill="#7a5a30"/><rect x="355" y="300.12000000000006" width="2" height="0.8" fill="#7a5a30"/><rect x="355" y="306.69000000000005" width="2" height="0.8" fill="#7a5a30"/><rect x="355" y="313.26000000000005" width="2" height="0.8" fill="#7a5a30"/><rect x="355" y="319.83000000000004" width="2" height="0.8" fill="#7a5a30"/><rect x="355" y="326.40000000000003" width="2" height="0.8" fill="#7a5a30"/><rect x="355" y="332.97" width="2" height="0.8" fill="#7a5a30"/><rect x="358" y="273.9" width="38" height="0.9" fill="#8a8a20" opacity="0.8"/><rect x="386.3" y="285" width="39.1" height="47" fill="#0c18f6" /><rect x="386.3" y="308.2" width="39.1" height="2" fill="#2050ff" /><rect x="403" y="308.2" width="11" height="12" fill="#0810d8" /><rect x="386.3" y="287.17999999999995" width="39.1" height="1" fill="#6a6aff" opacity="0.8"/><rect x="386.3" y="293.75" width="39.1" height="1" fill="#6a6aff" opacity="0.8"/><rect x="386.3" y="300.32" width="39.1" height="1" fill="#6a6aff" opacity="0.8"/><rect x="386.3" y="306.89" width="39.1" height="1" fill="#6a6aff" opacity="0.8"/><rect x="386.3" y="313.46" width="39.1" height="1" fill="#6a6aff" opacity="0.8"/><rect x="386.3" y="320.03" width="39.1" height="1" fill="#6a6aff" opacity="0.8"/><rect x="386.3" y="326.59999999999997" width="39.1" height="1" fill="#6a6aff" opacity="0.8"/><rect x="358" y="320.2" width="86" height="1.1" fill="#a8a830"/><rect x="444.1" y="274.4" width="1.2" height="45.6" fill="#40c040"/><rect x="446.4" y="274.4" width="1.3" height="58" fill="#6a50d0"/><circle cx="504.2" cy="296.7" r="29.0" fill="none" stroke="#a06424" stroke-width="0.9"/><path d="M471,296.7 H485 M523,296.7 H537 M504.2,264 V278 M504.2,315 V329" stroke="#a06424" stroke-width="1.1"/><path d="M487,269 L499,289 M510,291 L531,277 M497,302 L477,315 M508,305 L521,325" stroke="#a06424" stroke-width="0.8"/><path d="M505,297 L496.7,268.8" stroke="#40d040" stroke-width="1.4"/><text x="508" y="262" font-size="3" fill="#a07040">R</text><text x="538.5" y="291" font-size="3" fill="#a07040">MG</text><text x="474" y="292" font-size="3" fill="#a07040">YL</text><text x="500" y="276" font-size="3" fill="#a07040">R</text><text x="498" y="305" font-size="3" fill="#a07040">G</text><text x="519" y="287" font-size="3" fill="#a07040">Mg</text><circle cx="514.1" cy="281.6" r="0.8" fill="#d0984a"/><circle cx="516.5" cy="273.6" r="0.8" fill="#d0984a"/><circle cx="510.1" cy="281.8" r="0.8" fill="#d0984a"/><circle cx="515.5" cy="279.2" r="0.8" fill="#d0984a"/><circle cx="516.8" cy="272.8" r="0.8" fill="#d0984a"/><circle cx="514.4" cy="277.5" r="0.8" fill="#d0984a"/><circle cx="513.6" cy="282.5" r="0.8" fill="#d0984a"/><circle cx="516.6" cy="273.6" r="0.8" fill="#d0984a"/><circle cx="512.6" cy="275.0" r="0.8" fill="#d0984a"/><circle cx="514.4" cy="272.0" r="0.8" fill="#d0984a"/><circle cx="511.4" cy="283.0" r="0.8" fill="#d0984a"/><circle cx="515.4" cy="275.8" r="0.8" fill="#d0984a"/><circle cx="516.6" cy="273.7" r="0.8" fill="#d0984a"/><circle cx="512.9" cy="276.4" r="0.8" fill="#d0984a"/><circle cx="509.8" cy="281.3" r="0.8" fill="#d0984a"/><circle cx="514.5" cy="281.6" r="0.8" fill="#d0984a"/><circle cx="514.6" cy="276.6" r="0.8" fill="#d0984a"/><circle cx="517.6" cy="275.4" r="0.8" fill="#d0984a"/><circle cx="516.1" cy="278.0" r="0.8" fill="#d0984a"/><circle cx="511.5" cy="278.9" r="0.8" fill="#d0984a"/><circle cx="518.9" cy="273.9" r="0.8" fill="#d0984a"/><circle cx="515.6" cy="276.1" r="0.8" fill="#d0984a"/><circle cx="484.7" cy="290.2" r="0.8" fill="#d0984a"/><circle cx="487.8" cy="290.0" r="0.8" fill="#d0984a"/><circle cx="488.0" cy="293.2" r="0.8" fill="#d0984a"/><circle cx="489.9" cy="290.3" r="0.8" fill="#d0984a"/><circle cx="493.3" cy="296.4" r="0.8" fill="#d0984a"/><circle cx="493.1" cy="294.1" r="0.8" fill="#d0984a"/><circle cx="489.3" cy="295.9" r="0.8" fill="#d0984a"/><circle cx="487.1" cy="295.0" r="0.8" fill="#d0984a"/><circle cx="488.6" cy="290.2" r="0.8" fill="#d0984a"/><circle cx="483.8" cy="289.8" r="0.8" fill="#d0984a"/><circle cx="493.8" cy="296.9" r="0.8" fill="#d0984a"/><circle cx="487.4" cy="294.3" r="0.8" fill="#d0984a"/><circle cx="483.5" cy="291.5" r="0.8" fill="#d0984a"/><circle cx="492.6" cy="295.6" r="0.8" fill="#d0984a"/><circle cx="491.0" cy="292.9" r="0.8" fill="#d0984a"/><circle cx="484.3" cy="292.0" r="0.8" fill="#d0984a"/><circle cx="484.7" cy="291.8" r="0.8" fill="#d0984a"/><circle cx="488.3" cy="291.1" r="0.8" fill="#d0984a"/><circle cx="483.9" cy="289.8" r="0.8" fill="#d0984a"/><circle cx="487.9" cy="290.8" r="0.8" fill="#d0984a"/><circle cx="491.3" cy="293.5" r="0.8" fill="#d0984a"/><circle cx="488.0" cy="294.7" r="0.8" fill="#d0984a"/><circle cx="525.8" cy="300.6" r="0.8" fill="#d0984a"/><circle cx="521.0" cy="302.0" r="0.8" fill="#d0984a"/><circle cx="521.6" cy="300.3" r="0.8" fill="#d0984a"/><circle cx="522.1" cy="300.6" r="0.8" fill="#d0984a"/><circle cx="517.5" cy="298.9" r="0.8" fill="#d0984a"/><circle cx="514.5" cy="300.5" r="0.8" fill="#d0984a"/><circle cx="518.0" cy="301.8" r="0.8" fill="#d0984a"/><circle cx="521.2" cy="299.8" r="0.8" fill="#d0984a"/><circle cx="516.2" cy="299.6" r="0.8" fill="#d0984a"/><circle cx="517.3" cy="299.0" r="0.8" fill="#d0984a"/><circle cx="523.2" cy="303.1" r="0.8" fill="#d0984a"/><circle cx="515.3" cy="300.9" r="0.8" fill="#d0984a"/><circle cx="524.1" cy="298.4" r="0.8" fill="#d0984a"/><circle cx="521.6" cy="302.8" r="0.8" fill="#d0984a"/><circle cx="515.2" cy="299.6" r="0.8" fill="#d0984a"/><circle cx="522.5" cy="298.2" r="0.8" fill="#d0984a"/><circle cx="524.7" cy="298.2" r="0.8" fill="#d0984a"/><circle cx="523.2" cy="298.9" r="0.8" fill="#d0984a"/><circle cx="519.8" cy="298.1" r="0.8" fill="#d0984a"/><circle cx="515.0" cy="296.5" r="0.8" fill="#d0984a"/><circle cx="523.6" cy="302.6" r="0.8" fill="#d0984a"/><circle cx="517.1" cy="301.1" r="0.8" fill="#d0984a"/><circle cx="490.8" cy="315.3" r="0.8" fill="#d0984a"/><circle cx="494.3" cy="312.9" r="0.8" fill="#d0984a"/><circle cx="492.2" cy="316.4" r="0.8" fill="#d0984a"/><circle cx="493.9" cy="314.3" r="0.8" fill="#d0984a"/><circle cx="493.7" cy="308.5" r="0.8" fill="#d0984a"/><circle cx="491.8" cy="313.4" r="0.8" fill="#d0984a"/><circle cx="489.3" cy="316.2" r="0.8" fill="#d0984a"/><circle cx="488.4" cy="318.7" r="0.8" fill="#d0984a"/><circle cx="496.2" cy="313.1" r="0.8" fill="#d0984a"/><circle cx="491.6" cy="320.8" r="0.8" fill="#d0984a"/><circle cx="494.0" cy="309.2" r="0.8" fill="#d0984a"/><circle cx="494.8" cy="311.9" r="0.8" fill="#d0984a"/><circle cx="494.6" cy="309.1" r="0.8" fill="#d0984a"/><circle cx="494.7" cy="316.1" r="0.8" fill="#d0984a"/><circle cx="493.3" cy="315.5" r="0.8" fill="#d0984a"/><circle cx="492.5" cy="320.5" r="0.8" fill="#d0984a"/><circle cx="492.7" cy="311.3" r="0.8" fill="#d0984a"/><circle cx="491.5" cy="318.1" r="0.8" fill="#d0984a"/><circle cx="497.6" cy="312.5" r="0.8" fill="#d0984a"/><circle cx="492.7" cy="318.9" r="0.8" fill="#d0984a"/><circle cx="494.1" cy="308.8" r="0.8" fill="#d0984a"/><circle cx="493.9" cy="314.1" r="0.8" fill="#d0984a"/><circle cx="507.3" cy="319.8" r="0.8" fill="#d0984a"/><circle cx="510.7" cy="317.3" r="0.8" fill="#d0984a"/><circle cx="512.3" cy="320.6" r="0.8" fill="#d0984a"/><circle cx="509.6" cy="312.6" r="0.8" fill="#d0984a"/><circle cx="505.8" cy="313.6" r="0.8" fill="#d0984a"/><circle cx="510.4" cy="313.5" r="0.8" fill="#d0984a"/><circle cx="507.5" cy="320.2" r="0.8" fill="#d0984a"/><circle cx="508.5" cy="315.2" r="0.8" fill="#d0984a"/><circle cx="509.9" cy="313.2" r="0.8" fill="#d0984a"/><circle cx="510.8" cy="316.1" r="0.8" fill="#d0984a"/><circle cx="507.7" cy="312.7" r="0.8" fill="#d0984a"/><circle cx="509.6" cy="321.3" r="0.8" fill="#d0984a"/><circle cx="508.3" cy="312.5" r="0.8" fill="#d0984a"/><circle cx="507.4" cy="319.9" r="0.8" fill="#d0984a"/><circle cx="510.2" cy="323.3" r="0.8" fill="#d0984a"/><circle cx="506.5" cy="315.4" r="0.8" fill="#d0984a"/><circle cx="509.6" cy="319.0" r="0.8" fill="#d0984a"/><circle cx="509.7" cy="313.3" r="0.8" fill="#d0984a"/><circle cx="506.2" cy="317.1" r="0.8" fill="#d0984a"/><circle cx="508.1" cy="315.3" r="0.8" fill="#d0984a"/><circle cx="507.8" cy="323.7" r="0.8" fill="#d0984a"/><circle cx="509.8" cy="322.6" r="0.8" fill="#d0984a"/><circle cx="500.8" cy="280.5" r="0.6" fill="#d8b048"/><circle cx="498.6" cy="278.5" r="0.6" fill="#d8b048"/><circle cx="499.3" cy="281.0" r="0.6" fill="#d8b048"/><circle cx="499.5" cy="271.7" r="0.6" fill="#d8b048"/><circle cx="499.1" cy="270.6" r="0.6" fill="#d8b048"/><circle cx="501.5" cy="283.5" r="0.6" fill="#d8b048"/><circle cx="501.6" cy="284.9" r="0.6" fill="#d8b048"/><circle cx="498.9" cy="271.5" r="0.6" fill="#d8b048"/><rect x="368" y="386" width="13" height="18" fill="#0c3a40"/><rect x="371" y="387" width="7" height="16" fill="#101c18"/><rect x="396" y="377.4" width="12" height="7" fill="#3a0a40"/><rect x="422" y="355" width="14" height="22" fill="#1e2008"/><rect x="476" y="357" width="12" height="51" fill="#2a0c06"/><rect x="358.9" y="345.65000000000003" width="82" height="0.9" fill="#a06424"/><rect x="465.5" y="345.65000000000003" width="83.5" height="0.9" fill="#a06424"/><rect x="358.9" y="352.05" width="82" height="0.9" fill="#a06424"/><rect x="465.5" y="352.05" width="83.5" height="0.9" fill="#a06424"/><rect x="358.9" y="358.45" width="82" height="0.9" fill="#a06424"/><rect x="465.5" y="358.45" width="83.5" height="0.9" fill="#a06424"/><rect x="358.9" y="364.65000000000003" width="82" height="0.9" fill="#a06424"/><rect x="465.5" y="364.65000000000003" width="83.5" height="0.9" fill="#a06424"/><rect x="358.9" y="370.85" width="82" height="0.9" fill="#a06424"/><rect x="465.5" y="370.85" width="83.5" height="0.9" fill="#a06424"/><rect x="358.9" y="376.95" width="82" height="0.9" fill="#a06424"/><rect x="465.5" y="376.95" width="83.5" height="0.9" fill="#a06424"/><rect x="358.9" y="383.55" width="82" height="0.9" fill="#a06424"/><rect x="465.5" y="383.55" width="83.5" height="0.9" fill="#a06424"/><rect x="358.9" y="389.95" width="82" height="0.9" fill="#a06424"/><rect x="465.5" y="389.95" width="83.5" height="0.9" fill="#a06424"/><rect x="358.9" y="396.15000000000003" width="82" height="0.9" fill="#a06424"/><rect x="465.5" y="396.15000000000003" width="83.5" height="0.9" fill="#a06424"/><rect x="358.9" y="402.55" width="82" height="0.9" fill="#a06424"/><rect x="465.5" y="402.55" width="83.5" height="0.9" fill="#a06424"/><rect x="358.9" y="408.45" width="82" height="0.9" fill="#a06424"/><rect x="465.5" y="408.45" width="83.5" height="0.9" fill="#a06424"/><rect x="358.5" y="345" width="0.9" height="64" fill="#a06424"/><rect x="465.5" y="345" width="0.9" height="64" fill="#a06424"/><path d="M368,386.5 H381 M362,403.5 H386" stroke="#30d0e0" stroke-width="1.1" fill="none"/><path d="M369,386 V404 M380,386 V404" stroke="#1890a0" stroke-width="1.2" fill="none"/><path d="M386,377.4 H413" stroke="#d030d0" stroke-width="1.1" fill="none"/><path d="M396,384 H408" stroke="#c020c0" stroke-width="1.1" fill="none"/><path d="M421,355.5 H437 M413,377.4 H437" stroke="#c8c830" stroke-width="1.1" fill="none"/><path d="M424,355 V377 M434,355 V377" stroke="#505010" stroke-width="1.2" fill="none"/><rect x="441.6" y="352" width="1.2" height="52" fill="#40c8c0"/><rect x="444.8" y="355" width="1.1" height="22" fill="#d0d040"/><rect x="443" y="377" width="2.5" height="7" fill="#8040a0"/><rect x="476" y="358" width="5" height="50" fill="#100404" opacity="0.85"/><rect x="484" y="358" width="5" height="50" fill="#100404" opacity="0.85"/><path d="M475,357.3 H489" stroke="#d01818" stroke-width="1.1" fill="none"/><rect x="466" y="408.3" width="24" height="1" fill="#b02010"/><rect x="495" y="408.3" width="25" height="1.1" fill="#30b020"/><rect x="525" y="408.3" width="20" height="1" fill="#3030c0"/><defs><linearGradient id="gb" x1="0" y1="0" x2="1" y2="0"><stop offset="0" stop-color="#90a838"/><stop offset="0.45" stop-color="#a0b048"/><stop offset="0.7" stop-color="#7070b8"/><stop offset="1" stop-color="#5048c8"/></linearGradient></defs><rect x="550" y="346" width="4.5" height="62" fill="url(#gb)"/><text x="321.5" y="273" font-size="19" fill="#e8e04a" text-anchor="middle" stroke="#e8e04a" stroke-width="0.35">4</text><text x="307" y="425.2" font-size="7.6" fill="#3592e0" text-anchor="start" textLength="36.5" lengthAdjust="spacingAndGlyphs" stroke="#3592e0" stroke-width="0.15">00:00:02:14</text><text x="592.2" y="425.2" font-size="7.6" fill="#c4c4c4" text-anchor="end" textLength="36.4" lengthAdjust="spacingAndGlyphs" stroke="#c8c8c8" stroke-width="0.15">00:00:02:19</text><g transform="translate(546,422.9) scale(0.85)"><path d="M-0.5,-0.5 L3,3" stroke="#a4a4a4" stroke-width="1.9" stroke-linecap="round"/><circle cx="-1.6" cy="-1.6" r="2.4" fill="#a4a4a4"/><path d="M-4.6,-3.2 L-2.3,-0.9 L-0.9,-2.3 L-3.2,-4.6 Z" fill="#262626"/></g><rect x="435" y="418.7" width="6" height="8" fill="#a4a4a4"/><rect x="436" y="419.7" width="4" height="2.5" fill="#333"/><rect x="436" y="423.2" width="4" height="2.5" fill="#333"/><rect x="446.6" y="422.0" width="2" height="1.4" fill="#a4a4a4"/><rect x="449.4" y="420.09999999999997" width="1.2" height="5.2" fill="#a4a4a4"/><path d="M451.2,421.0 L453.6,422.7 L451.2,424.4 Z" fill="#a4a4a4"/><rect x="302.1" y="435.7" width="0.8" height="1.3" fill="#5a5a5a"/><rect x="316.70000000000005" y="435.7" width="0.8" height="1.3" fill="#5a5a5a"/><rect x="331.3" y="435.7" width="0.8" height="1.3" fill="#5a5a5a"/><rect x="345.90000000000003" y="435.7" width="0.8" height="1.3" fill="#5a5a5a"/><rect x="360.5" y="435.7" width="0.8" height="1.3" fill="#5a5a5a"/><rect x="375.1" y="435.7" width="0.8" height="1.3" fill="#5a5a5a"/><rect x="389.70000000000005" y="435.7" width="0.8" height="1.3" fill="#5a5a5a"/><rect x="404.3" y="435.7" width="0.8" height="1.3" fill="#5a5a5a"/><rect x="418.90000000000003" y="435.7" width="0.8" height="1.3" fill="#5a5a5a"/><rect x="433.5" y="435.7" width="0.8" height="1.3" fill="#5a5a5a"/><rect x="448.1" y="435.7" width="0.8" height="1.3" fill="#5a5a5a"/><rect x="462.70000000000005" y="435.7" width="0.8" height="1.3" fill="#5a5a5a"/><rect x="477.3" y="435.7" width="0.8" height="1.3" fill="#5a5a5a"/><rect x="491.9" y="435.7" width="0.8" height="1.3" fill="#5a5a5a"/><rect x="506.5" y="435.7" width="0.8" height="1.3" fill="#5a5a5a"/><rect x="521.1" y="435.7" width="0.8" height="1.3" fill="#5a5a5a"/><rect x="535.7" y="435.7" width="0.8" height="1.3" fill="#5a5a5a"/><rect x="550.3000000000001" y="435.7" width="0.8" height="1.3" fill="#5a5a5a"/><rect x="564.9" y="435.7" width="0.8" height="1.3" fill="#5a5a5a"/><rect x="579.5" y="435.7" width="0.8" height="1.3" fill="#5a5a5a"/><rect x="595.6" y="432.2" width="0.8" height="5" fill="#5a5a5a"/><rect x="393" y="428.7" width="81.5" height="9" fill="#474747" /><rect x="392.5" y="428.7" width="1" height="9" fill="#3a86c2"/><rect x="474.0" y="428.7" width="1" height="9" fill="#3a86c2"/><rect x="432.55" y="432.7" width="2.5" height="2.5" fill="#2e2e2e" /><rect x="404.3" y="435.7" width="0.8" height="1.3" fill="#6a6a6a"/><rect x="418.90000000000003" y="435.7" width="0.8" height="1.3" fill="#6a6a6a"/><rect x="433.5" y="435.7" width="0.8" height="1.3" fill="#6a6a6a"/><rect x="448.1" y="435.7" width="0.8" height="1.3" fill="#6a6a6a"/><rect x="462.70000000000005" y="435.7" width="0.8" height="1.3" fill="#6a6a6a"/><path d="M375.0,431.7 h5 v3 l-2.5,2.2 l-2.5,-2.2 z" fill="#4aa8f0"/><rect x="303" y="437.7" width="294" height="1" fill="#1d1d1d" /><rect x="303" y="438.7" width="294" height="6.5" fill="#2b2b2b" /><rect x="303" y="445.2" width="294" height="1" fill="#1d1d1d" /><rect x="303" y="438.7" width="6" height="6.5" fill="#3c3c3c" /><rect x="591" y="438.7" width="6" height="6.5" fill="#3c3c3c" /><g transform="translate(366.8,452.5) scale(0.8)"><path d="M-2.5,-2.5 h5 v3 l-2.5,2.5 l-2.5,-2.5 z" fill="#a4a4a4"/></g><g transform="translate(384,452.5) scale(0.8)"><path d="M1.2,-3.5 h-0.6 q-0.6,0 -0.6,0.6 v2 l-1.0,0.9 l1.0,0.9 v2 q0,0.6 0.6,0.6 h0.6" stroke="#a4a4a4" stroke-width="1" fill="none"/></g><g transform="translate(398,452.5) scale(0.8)"><path d="M-1.2,-3.5 h0.6 q0.6,0 0.6,0.6 v2 l1.0,0.9 l-1.0,0.9 v2 q0,0.6 -0.6,0.6 h-0.6" stroke="#a4a4a4" stroke-width="1" fill="none"/></g><g transform="translate(419,452.5) scale(0.8)"><path d="M-1.8,-3.5 h-0.6 q-0.6,0 -0.6,0.6 v2 l-1.0,0.9 l1.0,0.9 v2 q0,0.6 0.6,0.6 h0.6" stroke="#a4a4a4" stroke-width="1" fill="none"/><path d="M-2,0 l3,-2.5 v1.7 h3 v1.6 h-3 v1.7 z" fill="#a4a4a4"/></g><g transform="translate(435,452.5) scale(0.8)"><path d="M-3.8,0 l4,-3.2 v6.4 z" fill="#a4a4a4"/><rect x="1.6" y="-3.2" width="1.5" height="6.4" fill="#a4a4a4"/></g><g transform="translate(450.5,452.5) scale(0.8)"><path d="M-2.5,-3.5 l6,3.5 l-6,3.5 z" fill="#a4a4a4"/></g><g transform="translate(466,452.5) scale(0.8)"><rect x="-3.1" y="-3.2" width="1.5" height="6.4" fill="#a4a4a4"/><path d="M-0.2,-3.2 l4,3.2 l-4,3.2 z" fill="#a4a4a4"/></g><g transform="translate(481.5,452.5) scale(0.8)"><path d="M-4,-0.8 h3 v-1.7 l3,2.5 l-3,2.5 v-1.7 h-3 z" fill="#a4a4a4"/><path d="M1.8,-3.5 h0.6 q0.6,0 0.6,0.6 v2 l1.0,0.9 l-1.0,0.9 v2 q0,0.6 -0.6,0.6 h-0.6" stroke="#a4a4a4" stroke-width="1" fill="none"/></g><g transform="translate(501.5,452.5) scale(1.0)"><rect x="-2.3" y="-3.4" width="4.6" height="2.6" fill="#6a6a6a"/><rect x="-0.6" y="-2.5" width="1.2" height="1.2" fill="#b8b8b8"/><rect x="-4.5" y="-1.3" width="4.2" height="4.1" fill="#a4a4a4"/><rect x="0.8" y="-1.3" width="3.8" height="4.1" fill="#a4a4a4"/><rect x="1.5" y="0" width="1.2" height="1.5" fill="#303030"/></g><g transform="translate(517.7,452.5) scale(1.0)"><rect x="-4.6" y="-0.3" width="9.2" height="3.1" fill="#a4a4a4"/><rect x="-2.4" y="-3.4" width="4.8" height="3.1" fill="#6a6a6a"/><rect x="-0.6" y="-2.5" width="1.2" height="1.2" fill="#c0c0c0"/></g><g transform="translate(533,452.5) scale(0.8)"><rect x="-4.6" y="-3.4" width="9.2" height="6.8" fill="none" stroke="#a4a4a4" stroke-width="1.6"/></g><g transform="translate(549.5,452.5) scale(1.0)"><path d="M-4.8,-1.9 L-1.5,0 L-4.8,1.9 Z M1.3,-1.9 L4.4,0 L1.3,1.9 Z" fill="#a4a4a4"/><rect x="-0.6" y="-3.9" width="1.2" height="1.5" fill="#a4a4a4"/><rect x="-0.6" y="-1.5" width="1.2" height="4.4" fill="#7a7a7a"/></g><g transform="translate(564.6,452.5) scale(1.0)"><path d="M-3.6,-1.2 V2.6 H3.6 V-1.2" stroke="#a4a4a4" stroke-width="1.3" fill="none"/><path d="M-0.4,-3.9 L2.9,-1.7 L-0.4,0.5 Z" fill="#a4a4a4"/><rect x="-1.2" y="-3.9" width="1.1" height="5.2" fill="#a4a4a4"/></g><path d="M579.2,448.3 l1.7,1.7 l-1.7,1.7 M581.6,448.3 l1.7,1.7 l-1.7,1.7" stroke="#b8b8b8" stroke-width="0.85" fill="none"/><path d="M586.9,453.3 h5.2 M589.5,450.7 v5.2" stroke="#d8d8d8" stroke-width="1.5"/><rect x="301.75" y="232.3" width="1.5" height="228.2" fill="#3d5262"/><rect x="415.65" y="232.3" width="1.5" height="11.299999999999999" fill="#3d5262"/><rect x="597.35" y="243.6" width="1.5" height="216.9" fill="#3d5262"/><rect x="301.75" y="231.8" width="115.4" height="1" fill="#3580ac"/><rect x="415.65" y="243.1" width="183.20000000000002" height="1" fill="#2f74a0"/><rect x="301.75" y="460.0" width="297.1" height="1" fill="#276788"/></svg>
</body></html>
